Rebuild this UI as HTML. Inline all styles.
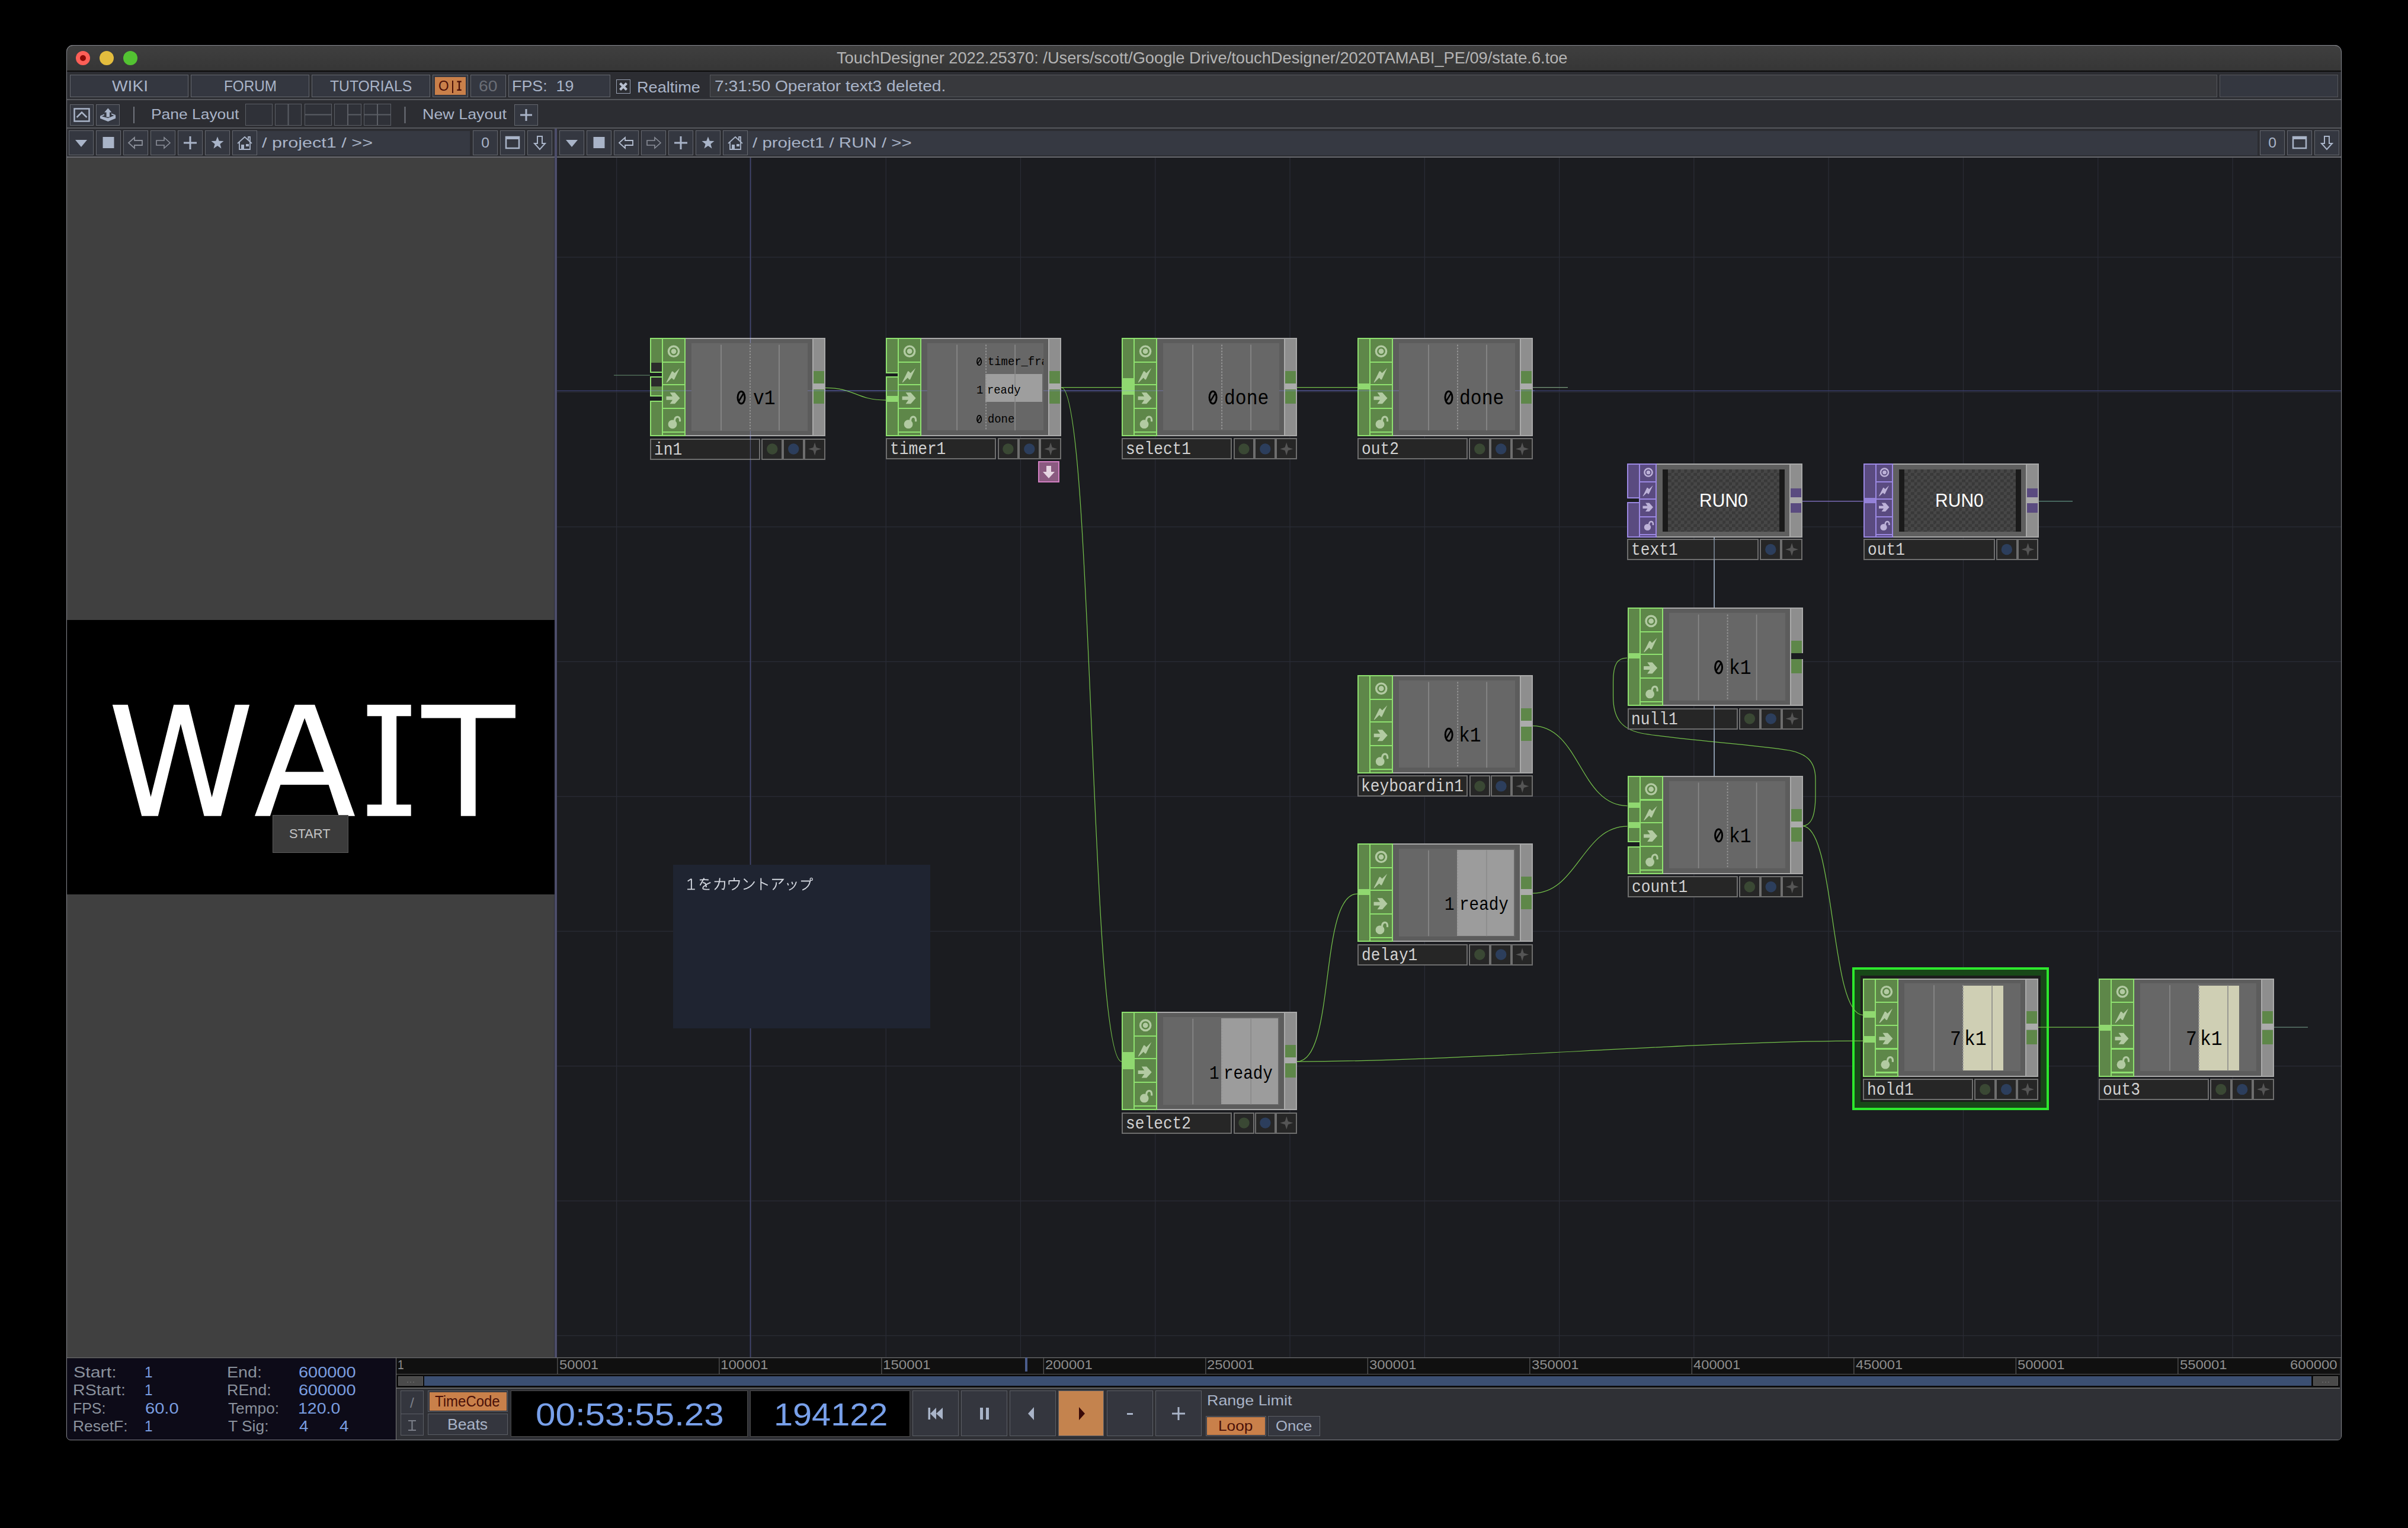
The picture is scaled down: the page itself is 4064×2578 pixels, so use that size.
<!DOCTYPE html>
<html><head><meta charset="utf-8"><title>TouchDesigner</title>
<style>
html,body{margin:0;padding:0;background:#000;width:4064px;height:2578px;overflow:hidden;position:relative;}
.a{position:absolute;}
.t{position:absolute;white-space:nowrap;}
svg{position:absolute;left:0;top:0;}
</style></head><body>
<div class="a" style="left:112px;top:76px;width:3839px;height:2353px;background:#2c2d32;border-radius:11px 11px 7px 7px;overflow:hidden;"></div><div class="a" style="left:112px;top:76px;width:3839px;height:43px;background:linear-gradient(#3f3f3f,#363636);border-radius:11px 11px 0 0;border-top:1px solid #707070;box-sizing:border-box;"></div><div class="a" style="left:112.0px;top:119.0px;width:3839.0px;height:2.0px;background:#0c0c0c;"></div><div class="a" style="left:127.8px;top:85.8px;width:24.4px;height:24.4px;border-radius:50%;background:#fe5f57;"></div><div class="a" style="left:135px;top:93px;width:10px;height:10px;border-radius:50%;background:#8c0a06;"></div><div class="a" style="left:167.8px;top:85.8px;width:24.4px;height:24.4px;border-radius:50%;background:#e4bd3e;"></div><div class="a" style="left:207.8px;top:85.8px;width:24.4px;height:24.4px;border-radius:50%;background:#53c232;"></div><div class="t" style="left:1412.39px;top:84.35px;font-family:'Liberation Sans', sans-serif;font-size:28.05px;line-height:28.05px;color:#b4b4b4;transform:scale(0.9712,1.0000);transform-origin:0 23.75px;">TouchDesigner 2022.25370: /Users/scott/Google Drive/touchDesigner/2020TAMABI_PE/09/state.6.toe</div><div class="a" style="left:112.0px;top:121.0px;width:3839.0px;height:47.0px;background:#2c2d32;"></div><div class="a" style="left:112.0px;top:167.0px;width:3839.0px;height:2.0px;background:#55575c;"></div><div class="a" style="left:118.0px;top:126.0px;width:200.0px;height:38.0px;background:#343740;box-sizing:border-box;border:1.5px solid #64676e;"></div><div class="t" style="left:188.73px;top:132.59px;font-family:'Liberation Sans', sans-serif;font-size:25.29px;line-height:25.29px;color:#a9b4c8;transform:scale(1.1137,1.0000);transform-origin:0 21.41px;">WIKI</div><div class="a" style="left:322.0px;top:126.0px;width:200.0px;height:38.0px;background:#343740;box-sizing:border-box;border:1.5px solid #64676e;"></div><div class="t" style="left:377.51px;top:132.59px;font-family:'Liberation Sans', sans-serif;font-size:25.29px;line-height:25.29px;color:#a9b4c8;transform:scale(0.9597,1.0000);transform-origin:0 21.41px;">FORUM</div><div class="a" style="left:526.0px;top:126.0px;width:200.0px;height:38.0px;background:#343740;box-sizing:border-box;border:1.5px solid #64676e;"></div><div class="t" style="left:556.94px;top:132.59px;font-family:'Liberation Sans', sans-serif;font-size:25.29px;line-height:25.29px;color:#a9b4c8;transform:scale(0.9772,1.0000);transform-origin:0 21.41px;">TUTORIALS</div><div class="a" style="left:730.0px;top:126.0px;width:60.0px;height:38.0px;background:#343740;box-sizing:border-box;border:1.5px solid #64676e;"></div><div class="a" style="left:734.0px;top:130.0px;width:52.0px;height:30.0px;background:#c9804a;"></div><div class="t" style="left:740.13px;top:132.69px;font-family:'Liberation Sans', sans-serif;font-size:23.98px;line-height:23.98px;color:#4a1008;transform:scale(0.9407,1.0000);transform-origin:0 20.31px;">O</div><div class="a" style="left:762.6px;top:136.0px;width:2.2px;height:21.0px;background:#4a1008;"></div><svg width="4064" height="2578"><path d="M771.4 136.5 L778.7 136.5 L778.7 138.8 L776.2 138.8 L776.2 150.8 L778.7 150.8 L778.7 153 L771.4 153 L771.4 150.8 L773.9 150.8 L773.9 138.8 L771.4 138.8 Z" fill="#4a1008"/></svg><div class="a" style="left:794.0px;top:126.0px;width:60.0px;height:38.0px;background:#343740;box-sizing:border-box;border:1.5px solid #64676e;"></div><div class="t" style="left:808.06px;top:132.59px;font-family:'Liberation Sans', sans-serif;font-size:25.29px;line-height:25.29px;color:#6a6e76;transform:scale(1.1215,1.0000);transform-origin:0 21.41px;">60</div><div class="a" style="left:858.0px;top:126.0px;width:172.0px;height:38.0px;background:#343740;box-sizing:border-box;border:1.5px solid #64676e;"></div><div class="t" style="left:864.00px;top:132.59px;font-family:'Liberation Sans', sans-serif;font-size:25.29px;line-height:25.29px;color:#a9b4c8;transform:scale(1.0618,1.0000);transform-origin:0 21.41px;">FPS:&nbsp;&nbsp;19</div><div class="a" style="left:1040.0px;top:134.0px;width:24.0px;height:24.0px;box-sizing:border-box;border:1.6px solid #9aa3b5;"></div><svg width="4064" height="2578" style="pointer-events:none"><path d="M1046.5 140.5 L1057.5 151.5 M1057.5 140.5 L1046.5 151.5" stroke="#b8c0d0" stroke-width="4.2"/></svg><div class="t" style="left:1074.78px;top:134.15px;font-family:'Liberation Sans', sans-serif;font-size:26.16px;line-height:26.16px;color:#a9b4c8;transform:scale(1.0358,1.0000);transform-origin:0 22.15px;">Realtime</div><div class="a" style="left:1198.0px;top:126.0px;width:2544.0px;height:38.0px;background:#38393d;box-sizing:border-box;border:1.5px solid #55575c;"></div><div class="t" style="left:1206.05px;top:133.29px;font-family:'Liberation Sans', sans-serif;font-size:25.29px;line-height:25.29px;color:#a9b4c8;transform:scale(1.1155,1.0000);transform-origin:0 21.41px;">7:31:50 Operator text3 deleted.</div><div class="a" style="left:3746.0px;top:126.0px;width:200.0px;height:38.0px;background:#343740;box-sizing:border-box;border:1.5px solid #55575c;"></div><div class="a" style="left:112.0px;top:169.0px;width:3839.0px;height:47.0px;background:#2c2d32;"></div><div class="a" style="left:112.0px;top:215.0px;width:3839.0px;height:2.0px;background:#55575c;"></div><div class="a" style="left:118.0px;top:176.0px;width:40.0px;height:36.0px;background:#343740;box-sizing:border-box;border:1.5px solid #64676e;"></div><div class="a" style="left:162.0px;top:176.0px;width:40.0px;height:36.0px;background:#343740;box-sizing:border-box;border:1.5px solid #64676e;"></div><svg width="4064" height="2578"><g fill="none" stroke="#a9b4c8" stroke-width="2.5"><rect x="125.5" y="183.5" width="25" height="21"/><path d="M129.5 198 L138 189.5 L146.5 198"/></g><g fill="#a9b4c8"><path d="M169 195.5 L169 199.8 L182.3 205 L195.1 199.8 L195.1 194.1 L182.3 199.3 Z"/><path d="M169 195.5 L176 192.5 L176 194.5 L171.5 196.3 Z M195.1 194.1 L188 191.2 L188 193.2 L192.5 195 Z"/><path d="M176.2 189.4 L182.3 182.6 L188.4 189.4 L185 189.4 L185 197.5 L179.6 197.5 L179.6 189.4 Z"/></g><path d="M226 180 L226 208" stroke="#70747c" stroke-width="2"/><path d="M683.5 180 L683.5 208" stroke="#70747c" stroke-width="2"/></svg><div class="t" style="left:254.83px;top:181.08px;font-family:'Liberation Sans', sans-serif;font-size:24.71px;line-height:24.71px;color:#a9b4c8;transform:scale(1.0692,1.0000);transform-origin:0 20.92px;">Pane Layout</div><div class="a" style="left:414.0px;top:175.0px;width:46.0px;height:37.0px;background:#2f3138;box-sizing:border-box;border:1.5px solid #5b5e65;"></div><div class="a" style="left:464.0px;top:175.0px;width:45.0px;height:37.0px;background:#2f3138;box-sizing:border-box;border:1.5px solid #5b5e65;"></div><div class="a" style="left:514.0px;top:175.0px;width:46.0px;height:37.0px;background:#2f3138;box-sizing:border-box;border:1.5px solid #5b5e65;"></div><div class="a" style="left:564.0px;top:175.0px;width:46.0px;height:37.0px;background:#2f3138;box-sizing:border-box;border:1.5px solid #5b5e65;"></div><div class="a" style="left:614.0px;top:175.0px;width:46.0px;height:37.0px;background:#2f3138;box-sizing:border-box;border:1.5px solid #5b5e65;"></div><svg width="4064" height="2578"><g stroke="#5b5e65" stroke-width="2" fill="none"><path d="M486.5 176 L486.5 211"/><path d="M515 193.5 L559 193.5"/><path d="M587 176 L587 211 M587 193.5 L609 193.5"/><path d="M637 176 L637 211 M615 193.5 L659 193.5"/></g></svg><div class="t" style="left:713.10px;top:181.08px;font-family:'Liberation Sans', sans-serif;font-size:24.71px;line-height:24.71px;color:#a9b4c8;transform:scale(1.0875,1.0000);transform-origin:0 20.92px;">New Layout</div><div class="a" style="left:868.0px;top:176.0px;width:40.0px;height:36.0px;background:#343740;box-sizing:border-box;border:1.5px solid #64676e;"></div><svg width="4064" height="2578"><path d="M888 184 L888 204 M878 194 L898 194" stroke="#a9b4c8" stroke-width="3"/></svg><div class="a" style="left:112.0px;top:217.0px;width:3839.0px;height:48.0px;background:#2c2d32;"></div><div class="a" style="left:112.0px;top:264.0px;width:3839.0px;height:2.0px;background:#68696e;"></div><div class="a" style="left:116.0px;top:220.0px;width:42.0px;height:42.0px;background:#343740;box-sizing:border-box;border:1.5px solid #64676e;"></div><div class="a" style="left:162.0px;top:220.0px;width:42.0px;height:42.0px;background:#343740;box-sizing:border-box;border:1.5px solid #64676e;"></div><div class="a" style="left:208.0px;top:220.0px;width:42.0px;height:42.0px;background:#343740;box-sizing:border-box;border:1.5px solid #64676e;"></div><div class="a" style="left:254.0px;top:220.0px;width:42.0px;height:42.0px;background:#343740;box-sizing:border-box;border:1.5px solid #64676e;"></div><div class="a" style="left:300.0px;top:220.0px;width:42.0px;height:42.0px;background:#343740;box-sizing:border-box;border:1.5px solid #64676e;"></div><div class="a" style="left:346.0px;top:220.0px;width:42.0px;height:42.0px;background:#343740;box-sizing:border-box;border:1.5px solid #64676e;"></div><div class="a" style="left:392.0px;top:220.0px;width:42.0px;height:42.0px;background:#343740;box-sizing:border-box;border:1.5px solid #64676e;"></div><div class="a" style="left:434.0px;top:221.0px;width:359.0px;height:41.0px;background:#363942;"></div><svg width="4064" height="2578"><path d="M127 236 L147 236 L137 248 Z" fill="#a9b4c8"/><rect x="173.5" y="231" width="19" height="19" fill="#a9b4c8"/><path d="M217 241 L227 232 L227 237 L240 237 L240 245 L227 245 L227 250 Z" fill="none" stroke="#8a8e98" stroke-width="1.8"/><path d="M287 241 L277 232 L277 237 L264 237 L264 245 L277 245 L277 250 Z" fill="none" stroke="#8a8e98" stroke-width="1.6"/><path d="M321 230 L321 252 M310 241 L332 241" stroke="#a9b4c8" stroke-width="3"/><polygon points="367.0,230.5 369.7,237.8 377.5,238.1 371.4,242.9 373.5,250.4 367.0,246.1 360.5,250.4 362.6,242.9 356.5,238.1 364.3,237.8" fill="#a9b4c8"/><path d="M401 242 L413 231 L425 242 M404 240 L404 252 L422 252 L422 240 M419 237 L419 231 L422 231 L422 239" fill="none" stroke="#a9b4c8" stroke-width="1.8"/><rect x="407" y="244" width="5" height="8" fill="#a9b4c8"/><rect x="415" y="243" width="5" height="4" fill="#a9b4c8"/></svg><div class="t" style="left:441.50px;top:229.08px;font-family:'Liberation Sans', sans-serif;font-size:24.71px;line-height:24.71px;color:#a9b4c8;transform:scale(1.2383,1.0000);transform-origin:0 20.92px;">/ project1 / &gt;&gt;</div><div class="a" style="left:944.0px;top:220.0px;width:42.0px;height:42.0px;background:#343740;box-sizing:border-box;border:1.5px solid #64676e;"></div><div class="a" style="left:990.0px;top:220.0px;width:42.0px;height:42.0px;background:#343740;box-sizing:border-box;border:1.5px solid #64676e;"></div><div class="a" style="left:1036.0px;top:220.0px;width:42.0px;height:42.0px;background:#343740;box-sizing:border-box;border:1.5px solid #64676e;"></div><div class="a" style="left:1082.0px;top:220.0px;width:42.0px;height:42.0px;background:#343740;box-sizing:border-box;border:1.5px solid #64676e;"></div><div class="a" style="left:1128.0px;top:220.0px;width:42.0px;height:42.0px;background:#343740;box-sizing:border-box;border:1.5px solid #64676e;"></div><div class="a" style="left:1174.0px;top:220.0px;width:42.0px;height:42.0px;background:#343740;box-sizing:border-box;border:1.5px solid #64676e;"></div><div class="a" style="left:1220.0px;top:220.0px;width:42.0px;height:42.0px;background:#343740;box-sizing:border-box;border:1.5px solid #64676e;"></div><div class="a" style="left:1262.0px;top:221.0px;width:2548.0px;height:41.0px;background:#363942;"></div><svg width="4064" height="2578"><path d="M955 236 L975 236 L965 248 Z" fill="#a9b4c8"/><rect x="1001.5" y="231" width="19" height="19" fill="#a9b4c8"/><path d="M1045 241 L1055 232 L1055 237 L1068 237 L1068 245 L1055 245 L1055 250 Z" fill="none" stroke="#b4bed0" stroke-width="1.8"/><path d="M1115 241 L1105 232 L1105 237 L1092 237 L1092 245 L1105 245 L1105 250 Z" fill="none" stroke="#8a8e98" stroke-width="1.6"/><path d="M1149 230 L1149 252 M1138 241 L1160 241" stroke="#a9b4c8" stroke-width="3"/><polygon points="1195.0,230.5 1197.7,237.8 1205.5,238.1 1199.4,242.9 1201.5,250.4 1195.0,246.1 1188.5,250.4 1190.6,242.9 1184.5,238.1 1192.3,237.8" fill="#a9b4c8"/><path d="M1229 242 L1241 231 L1253 242 M1232 240 L1232 252 L1250 252 L1250 240 M1247 237 L1247 231 L1250 231 L1250 239" fill="none" stroke="#a9b4c8" stroke-width="1.8"/><rect x="1235" y="244" width="5" height="8" fill="#a9b4c8"/><rect x="1243" y="243" width="5" height="4" fill="#a9b4c8"/></svg><div class="t" style="left:1269.50px;top:229.08px;font-family:'Liberation Sans', sans-serif;font-size:24.71px;line-height:24.71px;color:#a9b4c8;transform:scale(1.1937,1.0000);transform-origin:0 20.92px;">/ project1 / RUN / &gt;&gt;</div><div class="a" style="left:798.0px;top:220.0px;width:42.0px;height:42.0px;background:#343740;box-sizing:border-box;border:1.5px solid #64676e;"></div><div class="a" style="left:844.0px;top:220.0px;width:42.0px;height:42.0px;background:#343740;box-sizing:border-box;border:1.5px solid #64676e;"></div><div class="a" style="left:890.0px;top:220.0px;width:42.0px;height:42.0px;background:#343740;box-sizing:border-box;border:1.5px solid #64676e;"></div><svg width="4064" height="2578"><rect x="854" y="231" width="22" height="19" fill="none" stroke="#a9b4c8" stroke-width="2.5"/><rect x="854" y="231" width="22" height="4" fill="#a9b4c8"/><path d="M907 230 L915 230 L915 242 L920 242 L911 252 L902 242 L907 242 Z" fill="none" stroke="#a9b4c8" stroke-width="2"/></svg><div class="t" style="left:812.13px;top:229.08px;font-family:'Liberation Sans', sans-serif;font-size:24.71px;line-height:24.71px;color:#a9b4c8;">0</div><div class="a" style="left:3814.0px;top:220.0px;width:42.0px;height:42.0px;background:#343740;box-sizing:border-box;border:1.5px solid #64676e;"></div><div class="a" style="left:3860.0px;top:220.0px;width:42.0px;height:42.0px;background:#343740;box-sizing:border-box;border:1.5px solid #64676e;"></div><div class="a" style="left:3906.0px;top:220.0px;width:42.0px;height:42.0px;background:#343740;box-sizing:border-box;border:1.5px solid #64676e;"></div><svg width="4064" height="2578"><rect x="3870" y="231" width="22" height="19" fill="none" stroke="#a9b4c8" stroke-width="2.5"/><rect x="3870" y="231" width="22" height="4" fill="#a9b4c8"/><path d="M3923 230 L3931 230 L3931 242 L3936 242 L3927 252 L3918 242 L3923 242 Z" fill="none" stroke="#a9b4c8" stroke-width="2"/></svg><div class="t" style="left:3828.13px;top:229.08px;font-family:'Liberation Sans', sans-serif;font-size:24.71px;line-height:24.71px;color:#a9b4c8;">0</div><div class="a" style="left:935.5px;top:217.0px;width:4.5px;height:49.0px;background:#4c4d6a;"></div><div class="a" style="left:113.0px;top:266.0px;width:822.0px;height:2024.0px;background:#404040;"></div><div class="a" style="left:112.0px;top:266.0px;width:1.0px;height:2024.0px;background:#6a6a6a;"></div><div class="a" style="left:935.5px;top:266.0px;width:4.5px;height:2024.0px;background:#4c4d6a;"></div><div class="a" style="left:113.0px;top:1046.0px;width:823.0px;height:463.0px;background:#000000;"></div><svg width="4064" height="2578"><g fill="#ffffff"><polygon points="189.8,1189.1 215.7,1189.1 254.5,1344.6 293.2,1189.1 318.8,1189.1 357.6,1345.3 396.7,1189.1 421.1,1189.1 373.1,1376.7 344.5,1376.7 304.9,1221.2 266.8,1376.7 239.2,1376.7"/><path fill-rule="evenodd" d="M430,1376.7 L497.7,1189.1 L531.2,1189.1 L599,1376.7 L571.9,1376.7 L554.6,1324.1 L473.4,1324.1 L455.9,1376.7 Z M514.1,1211.5 L546.6,1302.2 L481.2,1302.2 Z"/><polygon points="619.7,1189.1 693.7,1189.1 693.7,1208.3 669.2,1208.3 669.2,1357.4 693.7,1357.4 693.7,1376.7 619.7,1376.7 619.7,1357.4 644.3,1357.4 644.3,1208.3 619.7,1208.3"/><polygon points="711,1189.1 869.9,1189.1 869.9,1211.5 802.7,1211.5 802.7,1376.7 777.8,1376.7 777.8,1211.5 711,1211.5"/></g></svg><div class="a" style="left:460.0px;top:1375.0px;width:128.0px;height:64.0px;background:#3b3b3b;box-sizing:border-box;border:1.5px solid #5a5a5a;"></div><div class="t" style="left:488.02px;top:1395.54px;font-family:'Liberation Sans', sans-serif;font-size:21.80px;line-height:21.80px;color:#c4c4c4;">START</div><div class="a" style="left:940.0px;top:266.0px;width:3011.0px;height:2024.0px;background:#1b1c20;"></div><svg width="4064" height="2578" viewBox="0 0 4064 2578"><defs><clipPath id="netclip"><rect x="940" y="266" width="3011" height="2024"/></clipPath></defs><g clip-path="url(#netclip)"><rect x="1040.0" y="266" width="1.3" height="2024" fill="#2a2c35"/><rect x="1267.3" y="266" width="1.3" height="2024" fill="#2a2c35"/><rect x="1494.6" y="266" width="1.3" height="2024" fill="#2a2c35"/><rect x="1721.8" y="266" width="1.3" height="2024" fill="#2a2c35"/><rect x="1949.1" y="266" width="1.3" height="2024" fill="#2a2c35"/><rect x="2176.4" y="266" width="1.3" height="2024" fill="#2a2c35"/><rect x="2403.7" y="266" width="1.3" height="2024" fill="#2a2c35"/><rect x="2631.0" y="266" width="1.3" height="2024" fill="#2a2c35"/><rect x="2858.2" y="266" width="1.3" height="2024" fill="#2a2c35"/><rect x="3085.5" y="266" width="1.3" height="2024" fill="#2a2c35"/><rect x="3312.8" y="266" width="1.3" height="2024" fill="#2a2c35"/><rect x="3540.1" y="266" width="1.3" height="2024" fill="#2a2c35"/><rect x="3767.4" y="266" width="1.3" height="2024" fill="#2a2c35"/><rect x="940" y="433.3" width="3011" height="1.3" fill="#2a2c35"/><rect x="940" y="660.8" width="3011" height="1.3" fill="#2a2c35"/><rect x="940" y="888.2" width="3011" height="1.3" fill="#2a2c35"/><rect x="940" y="1115.7" width="3011" height="1.3" fill="#2a2c35"/><rect x="940" y="1343.1" width="3011" height="1.3" fill="#2a2c35"/><rect x="940" y="1570.6" width="3011" height="1.3" fill="#2a2c35"/><rect x="940" y="1798.0" width="3011" height="1.3" fill="#2a2c35"/><rect x="940" y="2025.5" width="3011" height="1.3" fill="#2a2c35"/><rect x="940" y="2252.9" width="3011" height="1.3" fill="#2a2c35"/><rect x="1265.7" y="266" width="1.3" height="2024" fill="#474b7c"/><rect x="940" y="658.7" width="3011" height="1.3" fill="#3c4070"/><rect x="1136" y="1459" width="434" height="276" fill="#1f2431"/></g></svg><div class="a" style="left:3126.0px;top:1632.0px;width:332.0px;height:241.0px;background:#184818;box-sizing:border-box;border:4.4px solid #2de82d;"></div><div class="a" style="left:3140.0px;top:1645.7px;width:303.6px;height:213.0px;background:#1c1c1c;"></div><svg width="4064" height="2578"><g fill="none"><rect x="2892.6" y="897" width="1.1" height="412" fill="#a4b6cc"/><path d="M1393,654.3 C1443,654.3 1445,675 1495,675" stroke="#74c04a" stroke-width="1.25"/><path d="M1791,653.6 L1893,653.6" stroke="#74c04a" stroke-width="1.25"/><path d="M1791,653.6 C1845,653.6 1839,1791 1893,1791" stroke="#74c04a" stroke-width="1.25"/><path d="M2189,653.6 L2291,653.6" stroke="#74c04a" stroke-width="1.25"/><path d="M2587,653.6 L2646,653.6" stroke="#7a9a7c" stroke-width="1.25"/><path d="M1036,633 L1097,633" stroke="#5a7a60" stroke-width="1.25"/><path d="M3042,845.5 L3144.5,845.5" stroke="#8a78d0" stroke-width="1.25"/><path d="M3440,845.5 L3498,845.5" stroke="#5f8f80" stroke-width="1.25"/><path d="M2586.3,1224.5 C2666.3,1224.5 2666.4,1359.5 2746.4,1359.5" stroke="#74c04a" stroke-width="1.25"/><path d="M2586.3,1507.2 C2662.3,1507.2 2670.4,1394.2 2746.4,1394.2" stroke="#74c04a" stroke-width="1.25"/><path d="M2189,1791 C2255,1791 2225,1508 2291,1508" stroke="#74c04a" stroke-width="1.25"/><path d="M2189,1791 C2464,1791 2869,1756 3144,1756" stroke="#74c04a" stroke-width="1.25"/><path d="M3041,1393.5 C3058,1393.5 3064,1375 3064,1340 L3064,1315 C3064,1285 3050,1272 3020,1266 C2960,1256 2830,1248 2770,1237 C2735,1230 2722.6,1210 2722.6,1175 L2722.6,1150 C2722.6,1120 2730,1110 2746,1110" stroke="#74c04a" stroke-width="1.25"/><path d="M3042,1393.7 C3098,1393.7 3088,1712.5 3144,1712.5" stroke="#74c04a" stroke-width="1.25"/><path d="M3440,1733 L3542,1733" stroke="#74c04a" stroke-width="1.25"/><path d="M3838,1733 L3895,1733" stroke="#6a8a7a" stroke-width="1.25"/></g></svg><svg width="4064" height="2578"><g transform="translate(1155,1475) scale(0.09137)" fill="none" stroke="#d2d6de" stroke-width="21"><path d="M130,85 L130,280 M62,128 L130,85 M55,278 L195,278"/><path d="M283,105 Q365,95 447,104 M366,71 L290,205 M339,157 C375,150 404,170 404,241 M402,189 L484,153 M391,207 C350,220 335,250 345,268 C355,282 400,280 464,280"/><path d="M555,135 L745,135 C745,200 740,260 725,278 L690,272 M655,70 C652,160 620,240 560,285"/><path d="M920,62 L920,115 M825,118 L825,192 M825,120 L1015,120 C1010,200 960,260 880,288"/><path d="M1100,85 L1168,148 M1095,278 C1180,260 1250,210 1295,135"/><path d="M1415,70 L1415,292 M1425,150 L1540,205"/><path d="M1620,95 L1825,95 C1800,130 1770,160 1745,178 M1700,148 C1700,210 1680,255 1635,288"/><path d="M1905,162 L1922,205 M1985,140 L2002,188 M2068,138 C2050,210 2010,265 1935,292"/><path d="M2155,125 L2325,125 C2310,200 2270,260 2180,292"/><circle cx="2345" cy="92" r="22" stroke-width="14"/></g></svg><div class="a" style="left:1097.0px;top:570.3px;width:296.0px;height:166.0px;background:#a9a9a9;"></div><div class="a" style="left:1157.0px;top:572.3px;width:214.0px;height:162.0px;background:#5c5c5c;"></div><div class="a" style="left:1373.0px;top:572.3px;width:18.0px;height:162.0px;background:#8e8e8e;"></div><div class="a" style="left:1371.0px;top:572.3px;width:2.0px;height:162.0px;background:#a9a9a9;"></div><div class="a" style="left:1167.0px;top:579.0px;width:196.0px;height:147.6px;background:#676767;"></div><svg width="4064" height="2578"><rect x="1216.2" y="581.7" width="1.6" height="144.6" fill="#8a8a8a"/><rect x="1314.2" y="581.7" width="1.6" height="144.6" fill="#8a8a8a"/><line x1="1266.0" y1="581.7" x2="1266.0" y2="726.3" stroke="#969696" stroke-width="1.9" stroke-dasharray="2.6 2.4"/></svg><div class="a" style="left:1097.0px;top:570.3px;width:60.0px;height:166.0px;background:#5e8749;box-sizing:border-box;border:2.2px solid #8ee06f;"></div><div class="a" style="left:1117.0px;top:570.3px;width:2.0px;height:166.0px;background:#8ee06f;"></div><div class="a" style="left:1117.0px;top:609.7px;width:40.0px;height:2.2px;background:#8ee06f;"></div><div class="a" style="left:1117.0px;top:648.2px;width:40.0px;height:2.2px;background:#8ee06f;"></div><div class="a" style="left:1117.0px;top:688.0px;width:40.0px;height:2.2px;background:#8ee06f;"></div><div class="a" style="left:1117.0px;top:728.0px;width:40.0px;height:2.2px;background:#8ee06f;"></div><div class="a" style="left:1099.2px;top:612.0px;width:18.0px;height:14.6px;background:#2b2b2b;"></div><div class="a" style="left:1097.0px;top:626.6px;width:20.0px;height:2.2px;background:#8ee06f;"></div><div class="a" style="left:1097.0px;top:628.8px;width:20.0px;height:6.2px;background:#1b1c20;"></div><div class="a" style="left:1097.0px;top:635.0px;width:20.0px;height:2.2px;background:#8ee06f;"></div><div class="a" style="left:1099.2px;top:637.3px;width:18.0px;height:15.2px;background:#2b2b2b;"></div><div class="a" style="left:1097.0px;top:667.1px;width:20.0px;height:2.2px;background:#8ee06f;"></div><div class="a" style="left:1097.0px;top:669.3px;width:20.0px;height:6.7px;background:#1b1c20;"></div><div class="a" style="left:1097.0px;top:676.0px;width:20.0px;height:2.2px;background:#8ee06f;"></div><svg width="4064" height="2578"><circle cx="1137" cy="592.8" r="8.6" fill="none" stroke="#b2caa2" stroke-width="3.4"/><circle cx="1137" cy="592.8" r="4.4" fill="#b2caa2"/><polygon points="1124.6,645.0 1134.0,626.4 1135.8,626.7 1138.5,629.6 1147.1,621.2 1137.9,640.5 1136.1,640.3 1133.8,637.4 1125.4,645.5" fill="#b2caa2"/><polygon points="1124.5,668.8 1135.0,668.8 1130.5,662.3 1139.0,662.3 1147.5,671.8 1139.0,681.3 1130.5,681.3 1135.0,674.8 1124.5,674.8" fill="#b2caa2"/><circle cx="1135" cy="715.8" r="7.4" fill="#b2caa2"/><path d="M1138.5 710.3 C1138.5 701.3 1147.5 701.3 1147.5 708.3 L1147.5 711.3" fill="none" stroke="#b2caa2" stroke-width="3.2"/></svg><div class="a" style="left:1373.0px;top:625.9px;width:18.0px;height:21.0px;background:#5e8749;"></div><div class="a" style="left:1373.0px;top:646.9px;width:20.0px;height:10.2px;background:#ababab;"></div><div class="a" style="left:1373.0px;top:657.1px;width:18.0px;height:24.0px;background:#5e8749;"></div><svg width="4064" height="2578"><ellipse cx="1251.00" cy="670.70" rx="6.00" ry="10.30" fill="none" stroke="#000" stroke-width="3.00"/><path d="M1247.00 676.50 L1255.00 663.50" stroke="#000" stroke-width="2.60"/></svg><div class="t" style="left:1270.54px;top:655.17px;font-family:'Liberation Mono', monospace;font-size:35.68px;line-height:35.68px;color:#000;transform:scale(0.8800,1.0000);transform-origin:0 27.33px;">v1</div><div class="a" style="left:1097.0px;top:739.5px;width:186.0px;height:36.0px;background:#262626;box-sizing:border-box;border:2px solid #6e6e6e;"></div><div class="a" style="left:1285.4px;top:739.5px;width:35.9px;height:36.0px;background:#262626;box-sizing:border-box;border:2px solid #6e6e6e;"></div><div class="a" style="left:1321.3px;top:739.5px;width:35.9px;height:36.0px;background:#262626;box-sizing:border-box;border:2px solid #6e6e6e;"></div><div class="a" style="left:1357.1px;top:739.5px;width:35.9px;height:36.0px;background:#262626;box-sizing:border-box;border:2px solid #6e6e6e;"></div><svg width="4064" height="2578"><circle cx="1303.3" cy="757.5" r="9.2" fill="#3a4834"/><circle cx="1339.2" cy="757.5" r="9.2" fill="#2c3e5c"/><polygon points="1375.1,746.5 1377.7,754.9 1386.1,757.5 1377.7,760.1 1375.1,768.5 1372.5,760.1 1364.1,757.5 1372.5,754.9" fill="#555555"/></svg><div class="t" style="left:1104.17px;top:744.54px;font-family:'Liberation Mono', monospace;font-size:29.45px;line-height:29.45px;color:#d2d2d2;transform:scale(0.8900,1.0000);transform-origin:0 22.56px;">in1</div><div class="a" style="left:1495.1px;top:570.2px;width:296.0px;height:166.0px;background:#a9a9a9;"></div><div class="a" style="left:1555.1px;top:572.2px;width:214.0px;height:162.0px;background:#5c5c5c;"></div><div class="a" style="left:1771.1px;top:572.2px;width:18.0px;height:162.0px;background:#8e8e8e;"></div><div class="a" style="left:1769.1px;top:572.2px;width:2.0px;height:162.0px;background:#a9a9a9;"></div><div class="a" style="left:1565.1px;top:578.9px;width:196.0px;height:147.6px;background:#676767;"></div><div class="a" style="left:1663.3px;top:631.1px;width:95.8px;height:46.7px;background:#9e9e9e;"></div><svg width="4064" height="2578"><rect x="1614.3" y="581.6" width="1.6" height="144.6" fill="#8a8a8a"/><rect x="1712.3" y="581.6" width="1.6" height="144.6" fill="#8a8a8a"/><line x1="1664.1" y1="581.6" x2="1664.1" y2="726.2" stroke="#969696" stroke-width="1.9" stroke-dasharray="2.6 2.4"/></svg><div class="a" style="left:1495.1px;top:570.2px;width:60.0px;height:166.0px;background:#5e8749;box-sizing:border-box;border:2.2px solid #8ee06f;"></div><div class="a" style="left:1515.1px;top:570.2px;width:2.0px;height:166.0px;background:#8ee06f;"></div><div class="a" style="left:1515.1px;top:609.6px;width:40.0px;height:2.2px;background:#8ee06f;"></div><div class="a" style="left:1515.1px;top:648.1px;width:40.0px;height:2.2px;background:#8ee06f;"></div><div class="a" style="left:1515.1px;top:687.9px;width:40.0px;height:2.2px;background:#8ee06f;"></div><div class="a" style="left:1515.1px;top:727.9px;width:40.0px;height:2.2px;background:#8ee06f;"></div><div class="a" style="left:1495.1px;top:627.6px;width:20.0px;height:2.2px;background:#8ee06f;"></div><div class="a" style="left:1495.1px;top:629.8px;width:20.0px;height:5.4px;background:#1b1c20;"></div><div class="a" style="left:1495.1px;top:635.2px;width:20.0px;height:2.2px;background:#8ee06f;"></div><div class="a" style="left:1495.1px;top:668.2px;width:20.5px;height:9.6px;background:#90d870;"></div><svg width="4064" height="2578"><circle cx="1535.1" cy="592.7" r="8.6" fill="none" stroke="#b2caa2" stroke-width="3.4"/><circle cx="1535.1" cy="592.7" r="4.4" fill="#b2caa2"/><polygon points="1522.7,644.9 1532.1,626.3 1533.9,626.6 1536.6,629.5 1545.2,621.1 1536.0,640.4 1534.2,640.2 1531.9,637.3 1523.5,645.4" fill="#b2caa2"/><polygon points="1522.6,668.7 1533.1,668.7 1528.6,662.2 1537.1,662.2 1545.6,671.7 1537.1,681.2 1528.6,681.2 1533.1,674.7 1522.6,674.7" fill="#b2caa2"/><circle cx="1533.1" cy="715.7" r="7.4" fill="#b2caa2"/><path d="M1536.6 710.2 C1536.6 701.2 1545.6 701.2 1545.6 708.2 L1545.6 711.2" fill="none" stroke="#b2caa2" stroke-width="3.2"/></svg><div class="a" style="left:1771.1px;top:625.8px;width:18.0px;height:21.0px;background:#5e8749;"></div><div class="a" style="left:1771.1px;top:646.8px;width:20.0px;height:10.2px;background:#ababab;"></div><div class="a" style="left:1771.1px;top:657.0px;width:18.0px;height:24.0px;background:#5e8749;"></div><div class="a" style="left:1565.1px;top:578.9000000000001px;width:196px;height:147.6px;overflow:hidden;"><svg style="position:absolute;left:0;top:0" width="4064" height="2578"><ellipse cx="87.60" cy="31.02" rx="3.60" ry="6.18" fill="none" stroke="#000" stroke-width="1.80"/><path d="M85.20 34.50 L90.00 26.70" stroke="#000" stroke-width="1.56"/></svg><div class="t" style="left:101.45px;top:22.05px;font-family:'Liberation Mono', monospace;font-size:20.95px;line-height:20.95px;color:#000;transform:scale(0.9000,1.0000);transform-origin:0 16.05px;">timer_frames</div></div><div class="a" style="left:1565.1px;top:578.9000000000001px;width:196px;height:147.6px;overflow:hidden;"><div class="t" style="left:82.60px;top:70.55px;font-family:'Liberation Mono', monospace;font-size:20.95px;line-height:20.95px;color:#000;transform:scale(0.9000,1.0000);transform-origin:0 16.05px;">1</div><div class="t" style="left:100.97px;top:70.55px;font-family:'Liberation Mono', monospace;font-size:20.95px;line-height:20.95px;color:#000;transform:scale(0.9000,1.0000);transform-origin:0 16.05px;">ready</div></div><div class="a" style="left:1565.1px;top:578.9000000000001px;width:196px;height:147.6px;overflow:hidden;"><svg style="position:absolute;left:0;top:0" width="4064" height="2578"><ellipse cx="87.60" cy="128.02" rx="3.60" ry="6.18" fill="none" stroke="#000" stroke-width="1.80"/><path d="M85.20 131.50 L90.00 123.70" stroke="#000" stroke-width="1.56"/></svg><div class="t" style="left:101.93px;top:119.05px;font-family:'Liberation Mono', monospace;font-size:20.95px;line-height:20.95px;color:#000;transform:scale(0.9000,1.0000);transform-origin:0 16.05px;">done</div></div><div class="a" style="left:1495.1px;top:739.4px;width:186.0px;height:36.0px;background:#262626;box-sizing:border-box;border:2px solid #6e6e6e;"></div><div class="a" style="left:1683.5px;top:739.4px;width:35.9px;height:36.0px;background:#262626;box-sizing:border-box;border:2px solid #6e6e6e;"></div><div class="a" style="left:1719.4px;top:739.4px;width:35.9px;height:36.0px;background:#262626;box-sizing:border-box;border:2px solid #6e6e6e;"></div><div class="a" style="left:1755.2px;top:739.4px;width:35.9px;height:36.0px;background:#262626;box-sizing:border-box;border:2px solid #6e6e6e;"></div><svg width="4064" height="2578"><circle cx="1701.4" cy="757.4" r="9.2" fill="#3a4834"/><circle cx="1737.3" cy="757.4" r="9.2" fill="#2c3e5c"/><polygon points="1773.2,746.4 1775.8,754.8 1784.2,757.4 1775.8,760.0 1773.2,768.4 1770.6,760.0 1762.2,757.4 1770.6,754.8" fill="#555555"/></svg><div class="t" style="left:1501.67px;top:744.44px;font-family:'Liberation Mono', monospace;font-size:29.45px;line-height:29.45px;color:#d2d2d2;transform:scale(0.8900,1.0000);transform-origin:0 22.56px;">timer1</div><div class="a" style="left:1893.1px;top:570.2px;width:296.0px;height:166.0px;background:#a9a9a9;"></div><div class="a" style="left:1953.1px;top:572.2px;width:214.0px;height:162.0px;background:#5c5c5c;"></div><div class="a" style="left:2169.1px;top:572.2px;width:18.0px;height:162.0px;background:#8e8e8e;"></div><div class="a" style="left:2167.1px;top:572.2px;width:2.0px;height:162.0px;background:#a9a9a9;"></div><div class="a" style="left:1963.1px;top:578.9px;width:196.0px;height:147.6px;background:#676767;"></div><svg width="4064" height="2578"><rect x="2012.3" y="581.6" width="1.6" height="144.6" fill="#8a8a8a"/><rect x="2110.3" y="581.6" width="1.6" height="144.6" fill="#8a8a8a"/><line x1="2062.1" y1="581.6" x2="2062.1" y2="726.2" stroke="#969696" stroke-width="1.9" stroke-dasharray="2.6 2.4"/></svg><div class="a" style="left:1893.1px;top:570.2px;width:60.0px;height:166.0px;background:#5e8749;box-sizing:border-box;border:2.2px solid #8ee06f;"></div><div class="a" style="left:1913.1px;top:570.2px;width:2.0px;height:166.0px;background:#8ee06f;"></div><div class="a" style="left:1913.1px;top:609.6px;width:40.0px;height:2.2px;background:#8ee06f;"></div><div class="a" style="left:1913.1px;top:648.1px;width:40.0px;height:2.2px;background:#8ee06f;"></div><div class="a" style="left:1913.1px;top:687.9px;width:40.0px;height:2.2px;background:#8ee06f;"></div><div class="a" style="left:1913.1px;top:727.9px;width:40.0px;height:2.2px;background:#8ee06f;"></div><div class="a" style="left:1893.1px;top:638.0px;width:20.5px;height:28.2px;background:#90d870;"></div><svg width="4064" height="2578"><circle cx="1933.1" cy="592.7" r="8.6" fill="none" stroke="#b2caa2" stroke-width="3.4"/><circle cx="1933.1" cy="592.7" r="4.4" fill="#b2caa2"/><polygon points="1920.7,644.9 1930.1,626.3 1931.9,626.6 1934.6,629.5 1943.2,621.1 1934.0,640.4 1932.2,640.2 1929.9,637.3 1921.5,645.4" fill="#b2caa2"/><polygon points="1920.6,668.7 1931.1,668.7 1926.6,662.2 1935.1,662.2 1943.6,671.7 1935.1,681.2 1926.6,681.2 1931.1,674.7 1920.6,674.7" fill="#b2caa2"/><circle cx="1931.1" cy="715.7" r="7.4" fill="#b2caa2"/><path d="M1934.6 710.2 C1934.6 701.2 1943.6 701.2 1943.6 708.2 L1943.6 711.2" fill="none" stroke="#b2caa2" stroke-width="3.2"/></svg><div class="a" style="left:2169.1px;top:625.8px;width:18.0px;height:21.0px;background:#5e8749;"></div><div class="a" style="left:2169.1px;top:646.8px;width:20.0px;height:10.2px;background:#ababab;"></div><div class="a" style="left:2169.1px;top:657.0px;width:18.0px;height:24.0px;background:#5e8749;"></div><svg width="4064" height="2578"><ellipse cx="2047.10" cy="670.60" rx="6.00" ry="10.30" fill="none" stroke="#000" stroke-width="3.00"/><path d="M2043.10 676.40 L2051.10 663.40" stroke="#000" stroke-width="2.60"/></svg><div class="t" style="left:2065.58px;top:655.07px;font-family:'Liberation Mono', monospace;font-size:35.68px;line-height:35.68px;color:#000;transform:scale(0.8800,1.0000);transform-origin:0 27.33px;">done</div><div class="a" style="left:1893.1px;top:739.4px;width:186.0px;height:36.0px;background:#262626;box-sizing:border-box;border:2px solid #6e6e6e;"></div><div class="a" style="left:2081.5px;top:739.4px;width:35.9px;height:36.0px;background:#262626;box-sizing:border-box;border:2px solid #6e6e6e;"></div><div class="a" style="left:2117.4px;top:739.4px;width:35.9px;height:36.0px;background:#262626;box-sizing:border-box;border:2px solid #6e6e6e;"></div><div class="a" style="left:2153.2px;top:739.4px;width:35.9px;height:36.0px;background:#262626;box-sizing:border-box;border:2px solid #6e6e6e;"></div><svg width="4064" height="2578"><circle cx="2099.4" cy="757.4" r="9.2" fill="#3a4834"/><circle cx="2135.3" cy="757.4" r="9.2" fill="#2c3e5c"/><polygon points="2171.2,746.4 2173.8,754.8 2182.2,757.4 2173.8,760.0 2171.2,768.4 2168.6,760.0 2160.2,757.4 2168.6,754.8" fill="#555555"/></svg><div class="t" style="left:1899.96px;top:744.44px;font-family:'Liberation Mono', monospace;font-size:29.45px;line-height:29.45px;color:#d2d2d2;transform:scale(0.8900,1.0000);transform-origin:0 22.56px;">select1</div><div class="a" style="left:2291.0px;top:570.2px;width:296.0px;height:166.0px;background:#a9a9a9;"></div><div class="a" style="left:2351.0px;top:572.2px;width:214.0px;height:162.0px;background:#5c5c5c;"></div><div class="a" style="left:2567.0px;top:572.2px;width:18.0px;height:162.0px;background:#8e8e8e;"></div><div class="a" style="left:2565.0px;top:572.2px;width:2.0px;height:162.0px;background:#a9a9a9;"></div><div class="a" style="left:2361.0px;top:578.9px;width:196.0px;height:147.6px;background:#676767;"></div><svg width="4064" height="2578"><rect x="2410.2" y="581.6" width="1.6" height="144.6" fill="#8a8a8a"/><rect x="2508.2" y="581.6" width="1.6" height="144.6" fill="#8a8a8a"/><line x1="2460.0" y1="581.6" x2="2460.0" y2="726.2" stroke="#969696" stroke-width="1.9" stroke-dasharray="2.6 2.4"/></svg><div class="a" style="left:2291.0px;top:570.2px;width:60.0px;height:166.0px;background:#5e8749;box-sizing:border-box;border:2.2px solid #8ee06f;"></div><div class="a" style="left:2311.0px;top:570.2px;width:2.0px;height:166.0px;background:#8ee06f;"></div><div class="a" style="left:2311.0px;top:609.6px;width:40.0px;height:2.2px;background:#8ee06f;"></div><div class="a" style="left:2311.0px;top:648.1px;width:40.0px;height:2.2px;background:#8ee06f;"></div><div class="a" style="left:2311.0px;top:687.9px;width:40.0px;height:2.2px;background:#8ee06f;"></div><div class="a" style="left:2311.0px;top:727.9px;width:40.0px;height:2.2px;background:#8ee06f;"></div><div class="a" style="left:2291.0px;top:647.2px;width:20.5px;height:10.0px;background:#90d870;"></div><svg width="4064" height="2578"><circle cx="2331" cy="592.7" r="8.6" fill="none" stroke="#b2caa2" stroke-width="3.4"/><circle cx="2331" cy="592.7" r="4.4" fill="#b2caa2"/><polygon points="2318.6,644.9 2328.0,626.3 2329.8,626.6 2332.5,629.5 2341.1,621.1 2331.9,640.4 2330.1,640.2 2327.8,637.3 2319.4,645.4" fill="#b2caa2"/><polygon points="2318.5,668.7 2329.0,668.7 2324.5,662.2 2333.0,662.2 2341.5,671.7 2333.0,681.2 2324.5,681.2 2329.0,674.7 2318.5,674.7" fill="#b2caa2"/><circle cx="2329" cy="715.7" r="7.4" fill="#b2caa2"/><path d="M2332.5 710.2 C2332.5 701.2 2341.5 701.2 2341.5 708.2 L2341.5 711.2" fill="none" stroke="#b2caa2" stroke-width="3.2"/></svg><div class="a" style="left:2567.0px;top:625.8px;width:18.0px;height:21.0px;background:#5e8749;"></div><div class="a" style="left:2567.0px;top:646.8px;width:20.0px;height:10.2px;background:#ababab;"></div><div class="a" style="left:2567.0px;top:657.0px;width:18.0px;height:24.0px;background:#5e8749;"></div><svg width="4064" height="2578"><ellipse cx="2445.00" cy="670.60" rx="6.00" ry="10.30" fill="none" stroke="#000" stroke-width="3.00"/><path d="M2441.00 676.40 L2449.00 663.40" stroke="#000" stroke-width="2.60"/></svg><div class="t" style="left:2463.48px;top:655.07px;font-family:'Liberation Mono', monospace;font-size:35.68px;line-height:35.68px;color:#000;transform:scale(0.8800,1.0000);transform-origin:0 27.33px;">done</div><div class="a" style="left:2291.0px;top:739.4px;width:186.0px;height:36.0px;background:#262626;box-sizing:border-box;border:2px solid #6e6e6e;"></div><div class="a" style="left:2479.4px;top:739.4px;width:35.9px;height:36.0px;background:#262626;box-sizing:border-box;border:2px solid #6e6e6e;"></div><div class="a" style="left:2515.3px;top:739.4px;width:35.9px;height:36.0px;background:#262626;box-sizing:border-box;border:2px solid #6e6e6e;"></div><div class="a" style="left:2551.1px;top:739.4px;width:35.9px;height:36.0px;background:#262626;box-sizing:border-box;border:2px solid #6e6e6e;"></div><svg width="4064" height="2578"><circle cx="2497.3" cy="757.4" r="9.2" fill="#3a4834"/><circle cx="2533.2" cy="757.4" r="9.2" fill="#2c3e5c"/><polygon points="2569.1,746.4 2571.7,754.8 2580.1,757.4 2571.7,760.0 2569.1,768.4 2566.5,760.0 2558.1,757.4 2566.5,754.8" fill="#555555"/></svg><div class="t" style="left:2298.34px;top:744.44px;font-family:'Liberation Mono', monospace;font-size:29.45px;line-height:29.45px;color:#d2d2d2;transform:scale(0.8900,1.0000);transform-origin:0 22.56px;">out2</div><div class="a" style="left:2746.0px;top:782.2px;width:296.0px;height:124.5px;background:#a9a9a9;"></div><div class="a" style="left:2796.0px;top:784.2px;width:224.0px;height:120.5px;background:#5f5f5f;"></div><div class="a" style="left:3022.0px;top:784.2px;width:18.0px;height:120.5px;background:#8e8e8e;"></div><div class="a" style="left:3020.0px;top:784.2px;width:2.0px;height:120.5px;background:#a9a9a9;"></div><div class="a" style="left:2806.0px;top:791.7px;width:206.0px;height:105.0px;background:#1a1a1a;"></div><div class="a" style="left:2815px;top:791.7px;width:188px;height:105px;background-color:#474747;background-image:conic-gradient(#393939 25%, #474747 25% 50%, #393939 50% 75%, #474747 75%);background-size:10.8px 10.8px;"></div><div class="a" style="left:2746.0px;top:782.2px;width:50.0px;height:124.5px;background:#5a4b80;box-sizing:border-box;border:2.2px solid #9b88e2;"></div><div class="a" style="left:2766.0px;top:782.2px;width:2.0px;height:124.5px;background:#9b88e2;"></div><div class="a" style="left:2766.0px;top:811.7px;width:30.0px;height:2.0px;background:#9b88e2;"></div><div class="a" style="left:2766.0px;top:840.5px;width:30.0px;height:2.0px;background:#9b88e2;"></div><div class="a" style="left:2766.0px;top:870.5px;width:30.0px;height:2.0px;background:#9b88e2;"></div><div class="a" style="left:2766.0px;top:900.5px;width:30.0px;height:2.0px;background:#9b88e2;"></div><div class="a" style="left:2746.0px;top:838.6px;width:20.0px;height:2.2px;background:#9b88e2;"></div><div class="a" style="left:2746.0px;top:840.8px;width:20.0px;height:6.4px;background:#1b1c20;"></div><div class="a" style="left:2746.0px;top:847.2px;width:20.0px;height:2.2px;background:#9b88e2;"></div><svg width="4064" height="2578"></svg><svg width="4064" height="2578"><g transform="translate(2782.0,797.0) scale(0.76)"><circle cx="0" cy="0" r="8.6" fill="none" stroke="#bdb2d8" stroke-width="3.4"/><circle cx="0" cy="0" r="4.4" fill="#bdb2d8"/></g><g transform="translate(2782.0,826.2) scale(0.76)"><polygon points="-12.4,14.2 -3.0,-4.4 -1.2,-4.1 1.5,-1.2 10.1,-9.6 0.9,9.7 -0.9,9.5 -3.2,6.6 -11.6,14.7" fill="#bdb2d8"/></g><g transform="translate(2782.0,855.7) scale(0.76)"><polygon points="-12.5,-3.0 -2.0,-3.0 -6.5,-9.5 2.0,-9.5 10.5,0.0 2.0,9.5 -6.5,9.5 -2.0,3.0 -12.5,3.0" fill="#bdb2d8"/></g><g transform="translate(2782.0,885.7) scale(0.76)"><circle cx="-2" cy="5" r="7.4" fill="#bdb2d8"/><path d="M1.5 -0.5 C1.5 -9.5 10.5 -9.5 10.5 -2.5 L10.5 0.5" fill="none" stroke="#bdb2d8" stroke-width="3.2"/></g></svg><div class="a" style="left:3022.0px;top:823.9px;width:18.0px;height:14.8px;background:#5a4b80;"></div><div class="a" style="left:3022.0px;top:838.7px;width:20.0px;height:10.3px;background:#ababab;"></div><div class="a" style="left:3022.0px;top:849.0px;width:18.0px;height:15.7px;background:#5a4b80;"></div><div class="t" style="left:2867.83px;top:829.22px;font-family:'Liberation Sans', sans-serif;font-size:31.40px;line-height:31.40px;color:#ffffff;transform:scale(0.9574,1.0000);transform-origin:0 26.58px;">RUN0</div><div class="a" style="left:2746.0px;top:909.0px;width:222.0px;height:36.0px;background:#262626;box-sizing:border-box;border:2px solid #6e6e6e;"></div><div class="a" style="left:2970.4px;top:909.0px;width:35.8px;height:36.0px;background:#262626;box-sizing:border-box;border:2px solid #6e6e6e;"></div><div class="a" style="left:3006.2px;top:909.0px;width:35.8px;height:36.0px;background:#262626;box-sizing:border-box;border:2px solid #6e6e6e;"></div><svg width="4064" height="2578"><circle cx="2988.3" cy="927.0" r="9.2" fill="#2c3e5c"/><polygon points="3024.1,916.0 3026.7,924.4 3035.1,927.0 3026.7,929.6 3024.1,938.0 3021.5,929.6 3013.1,927.0 3021.5,924.4" fill="#555555"/></svg><div class="t" style="left:2752.57px;top:914.04px;font-family:'Liberation Mono', monospace;font-size:29.45px;line-height:29.45px;color:#d2d2d2;transform:scale(0.8900,1.0000);transform-origin:0 22.56px;">text1</div><div class="a" style="left:3144.5px;top:782.2px;width:296.0px;height:124.5px;background:#a9a9a9;"></div><div class="a" style="left:3194.5px;top:784.2px;width:224.0px;height:120.5px;background:#5f5f5f;"></div><div class="a" style="left:3420.5px;top:784.2px;width:18.0px;height:120.5px;background:#8e8e8e;"></div><div class="a" style="left:3418.5px;top:784.2px;width:2.0px;height:120.5px;background:#a9a9a9;"></div><div class="a" style="left:3204.5px;top:791.7px;width:206.0px;height:105.0px;background:#1a1a1a;"></div><div class="a" style="left:3213.5px;top:791.7px;width:188px;height:105px;background-color:#474747;background-image:conic-gradient(#393939 25%, #474747 25% 50%, #393939 50% 75%, #474747 75%);background-size:10.8px 10.8px;"></div><div class="a" style="left:3144.5px;top:782.2px;width:50.0px;height:124.5px;background:#5a4b80;box-sizing:border-box;border:2.2px solid #9b88e2;"></div><div class="a" style="left:3164.5px;top:782.2px;width:2.0px;height:124.5px;background:#9b88e2;"></div><div class="a" style="left:3164.5px;top:811.7px;width:30.0px;height:2.0px;background:#9b88e2;"></div><div class="a" style="left:3164.5px;top:840.5px;width:30.0px;height:2.0px;background:#9b88e2;"></div><div class="a" style="left:3164.5px;top:870.5px;width:30.0px;height:2.0px;background:#9b88e2;"></div><div class="a" style="left:3164.5px;top:900.5px;width:30.0px;height:2.0px;background:#9b88e2;"></div><div class="a" style="left:3144.5px;top:839.6px;width:20.5px;height:9.3px;background:#9482d8;"></div><svg width="4064" height="2578"></svg><svg width="4064" height="2578"><g transform="translate(3180.5,797.0) scale(0.76)"><circle cx="0" cy="0" r="8.6" fill="none" stroke="#bdb2d8" stroke-width="3.4"/><circle cx="0" cy="0" r="4.4" fill="#bdb2d8"/></g><g transform="translate(3180.5,826.2) scale(0.76)"><polygon points="-12.4,14.2 -3.0,-4.4 -1.2,-4.1 1.5,-1.2 10.1,-9.6 0.9,9.7 -0.9,9.5 -3.2,6.6 -11.6,14.7" fill="#bdb2d8"/></g><g transform="translate(3180.5,855.7) scale(0.76)"><polygon points="-12.5,-3.0 -2.0,-3.0 -6.5,-9.5 2.0,-9.5 10.5,0.0 2.0,9.5 -6.5,9.5 -2.0,3.0 -12.5,3.0" fill="#bdb2d8"/></g><g transform="translate(3180.5,885.7) scale(0.76)"><circle cx="-2" cy="5" r="7.4" fill="#bdb2d8"/><path d="M1.5 -0.5 C1.5 -9.5 10.5 -9.5 10.5 -2.5 L10.5 0.5" fill="none" stroke="#bdb2d8" stroke-width="3.2"/></g></svg><div class="a" style="left:3420.5px;top:823.9px;width:18.0px;height:14.8px;background:#5a4b80;"></div><div class="a" style="left:3420.5px;top:838.7px;width:20.0px;height:10.3px;background:#ababab;"></div><div class="a" style="left:3420.5px;top:849.0px;width:18.0px;height:15.7px;background:#5a4b80;"></div><div class="t" style="left:3266.33px;top:829.22px;font-family:'Liberation Sans', sans-serif;font-size:31.40px;line-height:31.40px;color:#ffffff;transform:scale(0.9574,1.0000);transform-origin:0 26.58px;">RUN0</div><div class="a" style="left:3144.5px;top:909.0px;width:222.0px;height:36.0px;background:#262626;box-sizing:border-box;border:2px solid #6e6e6e;"></div><div class="a" style="left:3368.9px;top:909.0px;width:35.8px;height:36.0px;background:#262626;box-sizing:border-box;border:2px solid #6e6e6e;"></div><div class="a" style="left:3404.7px;top:909.0px;width:35.8px;height:36.0px;background:#262626;box-sizing:border-box;border:2px solid #6e6e6e;"></div><svg width="4064" height="2578"><circle cx="3386.8" cy="927.0" r="9.2" fill="#2c3e5c"/><polygon points="3422.6,916.0 3425.2,924.4 3433.6,927.0 3425.2,929.6 3422.6,938.0 3420.0,929.6 3411.6,927.0 3420.0,924.4" fill="#555555"/></svg><div class="t" style="left:3151.84px;top:914.04px;font-family:'Liberation Mono', monospace;font-size:29.45px;line-height:29.45px;color:#d2d2d2;transform:scale(0.8900,1.0000);transform-origin:0 22.56px;">out1</div><div class="a" style="left:2746.6px;top:1025.4px;width:296.0px;height:166.0px;background:#a9a9a9;"></div><div class="a" style="left:2806.6px;top:1027.4px;width:214.0px;height:162.0px;background:#5c5c5c;"></div><div class="a" style="left:3022.6px;top:1027.4px;width:18.0px;height:162.0px;background:#8e8e8e;"></div><div class="a" style="left:3020.6px;top:1027.4px;width:2.0px;height:162.0px;background:#a9a9a9;"></div><div class="a" style="left:2816.6px;top:1034.1px;width:196.0px;height:147.6px;background:#676767;"></div><svg width="4064" height="2578"><rect x="2865.8" y="1036.8" width="1.6" height="144.6" fill="#8a8a8a"/><rect x="2963.8" y="1036.8" width="1.6" height="144.6" fill="#8a8a8a"/><line x1="2915.6" y1="1036.8" x2="2915.6" y2="1181.4" stroke="#969696" stroke-width="1.9" stroke-dasharray="2.6 2.4"/></svg><div class="a" style="left:2746.6px;top:1025.4px;width:60.0px;height:166.0px;background:#5e8749;box-sizing:border-box;border:2.2px solid #8ee06f;"></div><div class="a" style="left:2766.6px;top:1025.4px;width:2.0px;height:166.0px;background:#8ee06f;"></div><div class="a" style="left:2766.6px;top:1064.8px;width:40.0px;height:2.2px;background:#8ee06f;"></div><div class="a" style="left:2766.6px;top:1103.3px;width:40.0px;height:2.2px;background:#8ee06f;"></div><div class="a" style="left:2766.6px;top:1143.1px;width:40.0px;height:2.2px;background:#8ee06f;"></div><div class="a" style="left:2766.6px;top:1183.1px;width:40.0px;height:2.2px;background:#8ee06f;"></div><div class="a" style="left:2746.6px;top:1102.4px;width:20.5px;height:9.0px;background:#90d870;"></div><svg width="4064" height="2578"><circle cx="2786.6" cy="1047.9" r="8.6" fill="none" stroke="#b2caa2" stroke-width="3.4"/><circle cx="2786.6" cy="1047.9" r="4.4" fill="#b2caa2"/><polygon points="2774.2,1100.1 2783.6,1081.5 2785.4,1081.8 2788.1,1084.7 2796.7,1076.3 2787.5,1095.6 2785.7,1095.4 2783.4,1092.5 2775.0,1100.6" fill="#b2caa2"/><polygon points="2774.1,1123.9 2784.6,1123.9 2780.1,1117.4 2788.6,1117.4 2797.1,1126.9 2788.6,1136.4 2780.1,1136.4 2784.6,1129.9 2774.1,1129.9" fill="#b2caa2"/><circle cx="2784.6" cy="1170.9" r="7.4" fill="#b2caa2"/><path d="M2788.1 1165.4 C2788.1 1156.4 2797.1 1156.4 2797.1 1163.4 L2797.1 1166.4" fill="none" stroke="#b2caa2" stroke-width="3.2"/></svg><div class="a" style="left:3022.6px;top:1081.0px;width:18.0px;height:21.0px;background:#5e8749;"></div><div class="a" style="left:3022.6px;top:1102.0px;width:20.0px;height:10.2px;background:#1b1c20;"></div><div class="a" style="left:3022.6px;top:1112.2px;width:18.0px;height:24.0px;background:#5e8749;"></div><svg width="4064" height="2578"><ellipse cx="2900.60" cy="1125.80" rx="6.00" ry="10.30" fill="none" stroke="#000" stroke-width="3.00"/><path d="M2896.60 1131.60 L2904.60 1118.60" stroke="#000" stroke-width="2.60"/></svg><div class="t" style="left:2917.58px;top:1110.27px;font-family:'Liberation Mono', monospace;font-size:35.68px;line-height:35.68px;color:#000;transform:scale(0.8800,1.0000);transform-origin:0 27.33px;">k1</div><div class="a" style="left:2746.6px;top:1194.6px;width:186.0px;height:36.0px;background:#262626;box-sizing:border-box;border:2px solid #6e6e6e;"></div><div class="a" style="left:2935.0px;top:1194.6px;width:35.9px;height:36.0px;background:#262626;box-sizing:border-box;border:2px solid #6e6e6e;"></div><div class="a" style="left:2970.9px;top:1194.6px;width:35.9px;height:36.0px;background:#262626;box-sizing:border-box;border:2px solid #6e6e6e;"></div><div class="a" style="left:3006.7px;top:1194.6px;width:35.9px;height:36.0px;background:#262626;box-sizing:border-box;border:2px solid #6e6e6e;"></div><svg width="4064" height="2578"><circle cx="2952.9" cy="1212.6" r="9.2" fill="#3a4834"/><circle cx="2988.8" cy="1212.6" r="9.2" fill="#2c3e5c"/><polygon points="3024.7,1201.6 3027.3,1210.0 3035.7,1212.6 3027.3,1215.2 3024.7,1223.6 3022.1,1215.2 3013.7,1212.6 3022.1,1210.0" fill="#555555"/></svg><div class="t" style="left:2753.31px;top:1199.64px;font-family:'Liberation Mono', monospace;font-size:29.45px;line-height:29.45px;color:#d2d2d2;transform:scale(0.8900,1.0000);transform-origin:0 22.56px;">null1</div><div class="a" style="left:2291.2px;top:1139.2px;width:296.0px;height:166.0px;background:#a9a9a9;"></div><div class="a" style="left:2351.2px;top:1141.2px;width:214.0px;height:162.0px;background:#5c5c5c;"></div><div class="a" style="left:2567.2px;top:1141.2px;width:18.0px;height:162.0px;background:#8e8e8e;"></div><div class="a" style="left:2565.2px;top:1141.2px;width:2.0px;height:162.0px;background:#a9a9a9;"></div><div class="a" style="left:2361.2px;top:1147.9px;width:196.0px;height:147.6px;background:#676767;"></div><svg width="4064" height="2578"><rect x="2410.4" y="1150.6" width="1.6" height="144.6" fill="#8a8a8a"/><rect x="2508.4" y="1150.6" width="1.6" height="144.6" fill="#8a8a8a"/><line x1="2460.2" y1="1150.6" x2="2460.2" y2="1295.2" stroke="#969696" stroke-width="1.9" stroke-dasharray="2.6 2.4"/></svg><div class="a" style="left:2291.2px;top:1139.2px;width:60.0px;height:166.0px;background:#5e8749;box-sizing:border-box;border:2.2px solid #8ee06f;"></div><div class="a" style="left:2311.2px;top:1139.2px;width:2.0px;height:166.0px;background:#8ee06f;"></div><div class="a" style="left:2311.2px;top:1178.6px;width:40.0px;height:2.2px;background:#8ee06f;"></div><div class="a" style="left:2311.2px;top:1217.1px;width:40.0px;height:2.2px;background:#8ee06f;"></div><div class="a" style="left:2311.2px;top:1256.9px;width:40.0px;height:2.2px;background:#8ee06f;"></div><div class="a" style="left:2311.2px;top:1296.9px;width:40.0px;height:2.2px;background:#8ee06f;"></div><svg width="4064" height="2578"><circle cx="2331.2" cy="1161.7" r="8.6" fill="none" stroke="#b2caa2" stroke-width="3.4"/><circle cx="2331.2" cy="1161.7" r="4.4" fill="#b2caa2"/><polygon points="2318.8,1213.9 2328.2,1195.3 2330.0,1195.6 2332.7,1198.5 2341.3,1190.1 2332.1,1209.4 2330.3,1209.2 2328.0,1206.3 2319.6,1214.4" fill="#b2caa2"/><polygon points="2318.7,1237.7 2329.2,1237.7 2324.7,1231.2 2333.2,1231.2 2341.7,1240.7 2333.2,1250.2 2324.7,1250.2 2329.2,1243.7 2318.7,1243.7" fill="#b2caa2"/><circle cx="2329.2" cy="1284.7" r="7.4" fill="#b2caa2"/><path d="M2332.7 1279.2 C2332.7 1270.2 2341.7 1270.2 2341.7 1277.2 L2341.7 1280.2" fill="none" stroke="#b2caa2" stroke-width="3.2"/></svg><div class="a" style="left:2567.2px;top:1194.8px;width:18.0px;height:21.0px;background:#5e8749;"></div><div class="a" style="left:2567.2px;top:1215.8px;width:20.0px;height:10.2px;background:#ababab;"></div><div class="a" style="left:2567.2px;top:1226.0px;width:18.0px;height:24.0px;background:#5e8749;"></div><svg width="4064" height="2578"><ellipse cx="2445.20" cy="1239.60" rx="6.00" ry="10.30" fill="none" stroke="#000" stroke-width="3.00"/><path d="M2441.20 1245.40 L2449.20 1232.40" stroke="#000" stroke-width="2.60"/></svg><div class="t" style="left:2462.18px;top:1224.07px;font-family:'Liberation Mono', monospace;font-size:35.68px;line-height:35.68px;color:#000;transform:scale(0.8800,1.0000);transform-origin:0 27.33px;">k1</div><div class="a" style="left:2291.2px;top:1308.4px;width:186.0px;height:36.0px;background:#262626;box-sizing:border-box;border:2px solid #6e6e6e;"></div><div class="a" style="left:2479.6px;top:1308.4px;width:35.9px;height:36.0px;background:#262626;box-sizing:border-box;border:2px solid #6e6e6e;"></div><div class="a" style="left:2515.5px;top:1308.4px;width:35.9px;height:36.0px;background:#262626;box-sizing:border-box;border:2px solid #6e6e6e;"></div><div class="a" style="left:2551.3px;top:1308.4px;width:35.9px;height:36.0px;background:#262626;box-sizing:border-box;border:2px solid #6e6e6e;"></div><svg width="4064" height="2578"><circle cx="2497.5" cy="1326.4" r="9.2" fill="#3a4834"/><circle cx="2533.4" cy="1326.4" r="9.2" fill="#2c3e5c"/><polygon points="2569.3,1315.4 2571.9,1323.8 2580.3,1326.4 2571.9,1329.0 2569.3,1337.4 2566.7,1329.0 2558.3,1326.4 2566.7,1323.8" fill="#555555"/></svg><div class="t" style="left:2297.18px;top:1313.44px;font-family:'Liberation Mono', monospace;font-size:29.45px;line-height:29.45px;color:#d2d2d2;transform:scale(0.8900,1.0000);transform-origin:0 22.56px;">keyboardin1</div><div class="a" style="left:2746.6px;top:1309.0px;width:296.0px;height:166.0px;background:#a9a9a9;"></div><div class="a" style="left:2806.6px;top:1311.0px;width:214.0px;height:162.0px;background:#5c5c5c;"></div><div class="a" style="left:3022.6px;top:1311.0px;width:18.0px;height:162.0px;background:#8e8e8e;"></div><div class="a" style="left:3020.6px;top:1311.0px;width:2.0px;height:162.0px;background:#a9a9a9;"></div><div class="a" style="left:2816.6px;top:1317.7px;width:196.0px;height:147.6px;background:#676767;"></div><svg width="4064" height="2578"><rect x="2865.8" y="1320.4" width="1.6" height="144.6" fill="#8a8a8a"/><rect x="2963.8" y="1320.4" width="1.6" height="144.6" fill="#8a8a8a"/><line x1="2915.6" y1="1320.4" x2="2915.6" y2="1465.0" stroke="#969696" stroke-width="1.9" stroke-dasharray="2.6 2.4"/></svg><div class="a" style="left:2746.6px;top:1309.0px;width:60.0px;height:166.0px;background:#5e8749;box-sizing:border-box;border:2.2px solid #8ee06f;"></div><div class="a" style="left:2766.6px;top:1309.0px;width:2.0px;height:166.0px;background:#8ee06f;"></div><div class="a" style="left:2766.6px;top:1348.4px;width:40.0px;height:2.2px;background:#8ee06f;"></div><div class="a" style="left:2766.6px;top:1386.9px;width:40.0px;height:2.2px;background:#8ee06f;"></div><div class="a" style="left:2766.6px;top:1426.7px;width:40.0px;height:2.2px;background:#8ee06f;"></div><div class="a" style="left:2766.6px;top:1466.7px;width:40.0px;height:2.2px;background:#8ee06f;"></div><div class="a" style="left:2746.6px;top:1353.8px;width:20.5px;height:9.0px;background:#90d870;"></div><div class="a" style="left:2746.6px;top:1387.3px;width:20.5px;height:9.4px;background:#90d870;"></div><div class="a" style="left:2746.6px;top:1418.8px;width:20.0px;height:2.2px;background:#8ee06f;"></div><div class="a" style="left:2746.6px;top:1421.0px;width:20.0px;height:7.0px;background:#1b1c20;"></div><div class="a" style="left:2746.6px;top:1428.0px;width:20.0px;height:2.2px;background:#8ee06f;"></div><svg width="4064" height="2578"><circle cx="2786.6" cy="1331.5" r="8.6" fill="none" stroke="#b2caa2" stroke-width="3.4"/><circle cx="2786.6" cy="1331.5" r="4.4" fill="#b2caa2"/><polygon points="2774.2,1383.7 2783.6,1365.1 2785.4,1365.4 2788.1,1368.3 2796.7,1359.9 2787.5,1379.2 2785.7,1379.0 2783.4,1376.1 2775.0,1384.2" fill="#b2caa2"/><polygon points="2774.1,1407.5 2784.6,1407.5 2780.1,1401.0 2788.6,1401.0 2797.1,1410.5 2788.6,1420.0 2780.1,1420.0 2784.6,1413.5 2774.1,1413.5" fill="#b2caa2"/><circle cx="2784.6" cy="1454.5" r="7.4" fill="#b2caa2"/><path d="M2788.1 1449.0 C2788.1 1440.0 2797.1 1440.0 2797.1 1447.0 L2797.1 1450.0" fill="none" stroke="#b2caa2" stroke-width="3.2"/></svg><div class="a" style="left:3022.6px;top:1364.6px;width:18.0px;height:21.0px;background:#5e8749;"></div><div class="a" style="left:3022.6px;top:1385.6px;width:20.0px;height:10.2px;background:#ababab;"></div><div class="a" style="left:3022.6px;top:1395.8px;width:18.0px;height:24.0px;background:#5e8749;"></div><svg width="4064" height="2578"><ellipse cx="2900.60" cy="1409.40" rx="6.00" ry="10.30" fill="none" stroke="#000" stroke-width="3.00"/><path d="M2896.60 1415.20 L2904.60 1402.20" stroke="#000" stroke-width="2.60"/></svg><div class="t" style="left:2917.58px;top:1393.87px;font-family:'Liberation Mono', monospace;font-size:35.68px;line-height:35.68px;color:#000;transform:scale(0.8800,1.0000);transform-origin:0 27.33px;">k1</div><div class="a" style="left:2746.6px;top:1478.2px;width:186.0px;height:36.0px;background:#262626;box-sizing:border-box;border:2px solid #6e6e6e;"></div><div class="a" style="left:2935.0px;top:1478.2px;width:35.9px;height:36.0px;background:#262626;box-sizing:border-box;border:2px solid #6e6e6e;"></div><div class="a" style="left:2970.9px;top:1478.2px;width:35.9px;height:36.0px;background:#262626;box-sizing:border-box;border:2px solid #6e6e6e;"></div><div class="a" style="left:3006.7px;top:1478.2px;width:35.9px;height:36.0px;background:#262626;box-sizing:border-box;border:2px solid #6e6e6e;"></div><svg width="4064" height="2578"><circle cx="2952.9" cy="1496.2" r="9.2" fill="#3a4834"/><circle cx="2988.8" cy="1496.2" r="9.2" fill="#2c3e5c"/><polygon points="3024.7,1485.2 3027.3,1493.6 3035.7,1496.2 3027.3,1498.8 3024.7,1507.2 3022.1,1498.8 3013.7,1496.2 3022.1,1493.6" fill="#555555"/></svg><div class="t" style="left:2753.94px;top:1483.24px;font-family:'Liberation Mono', monospace;font-size:29.45px;line-height:29.45px;color:#d2d2d2;transform:scale(0.8900,1.0000);transform-origin:0 22.56px;">count1</div><div class="a" style="left:2291.0px;top:1423.3px;width:296.0px;height:166.0px;background:#a9a9a9;"></div><div class="a" style="left:2351.0px;top:1425.3px;width:214.0px;height:162.0px;background:#5c5c5c;"></div><div class="a" style="left:2567.0px;top:1425.3px;width:18.0px;height:162.0px;background:#8e8e8e;"></div><div class="a" style="left:2565.0px;top:1425.3px;width:2.0px;height:162.0px;background:#a9a9a9;"></div><div class="a" style="left:2361.0px;top:1432.0px;width:196.0px;height:147.6px;background:#676767;"></div><div class="a" style="left:2459.0px;top:1434.3px;width:96.0px;height:145.0px;background:#9c9c9c;"></div><svg width="4064" height="2578"><rect x="2410.2" y="1434.7" width="1.6" height="144.6" fill="#8a8a8a"/><rect x="2508.2" y="1434.7" width="1.6" height="144.6" fill="#8a8a8a"/><line x1="2460.0" y1="1434.7" x2="2460.0" y2="1579.3" stroke="#969696" stroke-width="1.9" stroke-dasharray="2.6 2.4"/></svg><div class="a" style="left:2291.0px;top:1423.3px;width:60.0px;height:166.0px;background:#5e8749;box-sizing:border-box;border:2.2px solid #8ee06f;"></div><div class="a" style="left:2311.0px;top:1423.3px;width:2.0px;height:166.0px;background:#8ee06f;"></div><div class="a" style="left:2311.0px;top:1462.7px;width:40.0px;height:2.2px;background:#8ee06f;"></div><div class="a" style="left:2311.0px;top:1501.2px;width:40.0px;height:2.2px;background:#8ee06f;"></div><div class="a" style="left:2311.0px;top:1541.0px;width:40.0px;height:2.2px;background:#8ee06f;"></div><div class="a" style="left:2311.0px;top:1581.0px;width:40.0px;height:2.2px;background:#8ee06f;"></div><div class="a" style="left:2291.0px;top:1500.0px;width:20.5px;height:10.2px;background:#90d870;"></div><svg width="4064" height="2578"><circle cx="2331" cy="1445.8" r="8.6" fill="none" stroke="#b2caa2" stroke-width="3.4"/><circle cx="2331" cy="1445.8" r="4.4" fill="#b2caa2"/><polygon points="2318.6,1498.0 2328.0,1479.4 2329.8,1479.7 2332.5,1482.6 2341.1,1474.2 2331.9,1493.5 2330.1,1493.3 2327.8,1490.4 2319.4,1498.5" fill="#b2caa2"/><polygon points="2318.5,1521.8 2329.0,1521.8 2324.5,1515.3 2333.0,1515.3 2341.5,1524.8 2333.0,1534.3 2324.5,1534.3 2329.0,1527.8 2318.5,1527.8" fill="#b2caa2"/><circle cx="2329" cy="1568.8" r="7.4" fill="#b2caa2"/><path d="M2332.5 1563.3 C2332.5 1554.3 2341.5 1554.3 2341.5 1561.3 L2341.5 1564.3" fill="none" stroke="#b2caa2" stroke-width="3.2"/></svg><div class="a" style="left:2567.0px;top:1478.9px;width:18.0px;height:21.0px;background:#5e8749;"></div><div class="a" style="left:2567.0px;top:1499.9px;width:20.0px;height:10.2px;background:#ababab;"></div><div class="a" style="left:2567.0px;top:1510.1px;width:18.0px;height:24.0px;background:#5e8749;"></div><div class="t" style="left:2438.36px;top:1511.45px;font-family:'Liberation Mono', monospace;font-size:31.40px;line-height:31.40px;color:#000;transform:scale(0.8800,1.0000);transform-origin:0 24.05px;">1</div><div class="t" style="left:2462.94px;top:1511.45px;font-family:'Liberation Mono', monospace;font-size:31.40px;line-height:31.40px;color:#000;transform:scale(0.8800,1.0000);transform-origin:0 24.05px;">ready</div><div class="a" style="left:2291.0px;top:1592.5px;width:186.0px;height:36.0px;background:#262626;box-sizing:border-box;border:2px solid #6e6e6e;"></div><div class="a" style="left:2479.4px;top:1592.5px;width:35.9px;height:36.0px;background:#262626;box-sizing:border-box;border:2px solid #6e6e6e;"></div><div class="a" style="left:2515.3px;top:1592.5px;width:35.9px;height:36.0px;background:#262626;box-sizing:border-box;border:2px solid #6e6e6e;"></div><div class="a" style="left:2551.1px;top:1592.5px;width:35.9px;height:36.0px;background:#262626;box-sizing:border-box;border:2px solid #6e6e6e;"></div><svg width="4064" height="2578"><circle cx="2497.3" cy="1610.5" r="9.2" fill="#3a4834"/><circle cx="2533.2" cy="1610.5" r="9.2" fill="#2c3e5c"/><polygon points="2569.1,1599.5 2571.7,1607.9 2580.1,1610.5 2571.7,1613.1 2569.1,1621.5 2566.5,1613.1 2558.1,1610.5 2566.5,1607.9" fill="#555555"/></svg><div class="t" style="left:2298.23px;top:1597.54px;font-family:'Liberation Mono', monospace;font-size:29.45px;line-height:29.45px;color:#d2d2d2;transform:scale(0.8900,1.0000);transform-origin:0 22.56px;">delay1</div><div class="a" style="left:1893.2px;top:1707.4px;width:296.0px;height:166.0px;background:#a9a9a9;"></div><div class="a" style="left:1953.2px;top:1709.4px;width:214.0px;height:162.0px;background:#5c5c5c;"></div><div class="a" style="left:2169.2px;top:1709.4px;width:18.0px;height:162.0px;background:#8e8e8e;"></div><div class="a" style="left:2167.2px;top:1709.4px;width:2.0px;height:162.0px;background:#a9a9a9;"></div><div class="a" style="left:1963.2px;top:1716.1px;width:196.0px;height:147.6px;background:#676767;"></div><div class="a" style="left:2061.2px;top:1718.4px;width:96.0px;height:145.0px;background:#9c9c9c;"></div><svg width="4064" height="2578"><rect x="2012.5" y="1718.8" width="1.6" height="144.6" fill="#8a8a8a"/><rect x="2110.4" y="1718.8" width="1.6" height="144.6" fill="#8a8a8a"/><line x1="2062.2" y1="1718.8" x2="2062.2" y2="1863.4" stroke="#969696" stroke-width="1.9" stroke-dasharray="2.6 2.4"/></svg><div class="a" style="left:1893.2px;top:1707.4px;width:60.0px;height:166.0px;background:#5e8749;box-sizing:border-box;border:2.2px solid #8ee06f;"></div><div class="a" style="left:1913.2px;top:1707.4px;width:2.0px;height:166.0px;background:#8ee06f;"></div><div class="a" style="left:1913.2px;top:1746.8px;width:40.0px;height:2.2px;background:#8ee06f;"></div><div class="a" style="left:1913.2px;top:1785.3px;width:40.0px;height:2.2px;background:#8ee06f;"></div><div class="a" style="left:1913.2px;top:1825.1px;width:40.0px;height:2.2px;background:#8ee06f;"></div><div class="a" style="left:1913.2px;top:1865.1px;width:40.0px;height:2.2px;background:#8ee06f;"></div><div class="a" style="left:1893.2px;top:1775.4px;width:20.5px;height:29.0px;background:#90d870;"></div><svg width="4064" height="2578"><circle cx="1933.2" cy="1729.9" r="8.6" fill="none" stroke="#b2caa2" stroke-width="3.4"/><circle cx="1933.2" cy="1729.9" r="4.4" fill="#b2caa2"/><polygon points="1920.8,1782.1 1930.2,1763.5 1932.0,1763.8 1934.7,1766.7 1943.3,1758.3 1934.1,1777.6 1932.3,1777.4 1930.0,1774.5 1921.6,1782.6" fill="#b2caa2"/><polygon points="1920.7,1805.9 1931.2,1805.9 1926.7,1799.4 1935.2,1799.4 1943.7,1808.9 1935.2,1818.4 1926.7,1818.4 1931.2,1811.9 1920.7,1811.9" fill="#b2caa2"/><circle cx="1931.2" cy="1852.9" r="7.4" fill="#b2caa2"/><path d="M1934.7 1847.4 C1934.7 1838.4 1943.7 1838.4 1943.7 1845.4 L1943.7 1848.4" fill="none" stroke="#b2caa2" stroke-width="3.2"/></svg><div class="a" style="left:2169.2px;top:1763.0px;width:18.0px;height:21.0px;background:#5e8749;"></div><div class="a" style="left:2169.2px;top:1784.0px;width:20.0px;height:10.2px;background:#ababab;"></div><div class="a" style="left:2169.2px;top:1794.2px;width:18.0px;height:24.0px;background:#5e8749;"></div><div class="t" style="left:2040.56px;top:1795.55px;font-family:'Liberation Mono', monospace;font-size:31.40px;line-height:31.40px;color:#000;transform:scale(0.8800,1.0000);transform-origin:0 24.05px;">1</div><div class="t" style="left:2065.14px;top:1795.55px;font-family:'Liberation Mono', monospace;font-size:31.40px;line-height:31.40px;color:#000;transform:scale(0.8800,1.0000);transform-origin:0 24.05px;">ready</div><div class="a" style="left:1893.2px;top:1876.6px;width:186.0px;height:36.0px;background:#262626;box-sizing:border-box;border:2px solid #6e6e6e;"></div><div class="a" style="left:2081.6px;top:1876.6px;width:35.9px;height:36.0px;background:#262626;box-sizing:border-box;border:2px solid #6e6e6e;"></div><div class="a" style="left:2117.5px;top:1876.6px;width:35.9px;height:36.0px;background:#262626;box-sizing:border-box;border:2px solid #6e6e6e;"></div><div class="a" style="left:2153.3px;top:1876.6px;width:35.9px;height:36.0px;background:#262626;box-sizing:border-box;border:2px solid #6e6e6e;"></div><svg width="4064" height="2578"><circle cx="2099.5" cy="1894.6" r="9.2" fill="#3a4834"/><circle cx="2135.4" cy="1894.6" r="9.2" fill="#2c3e5c"/><polygon points="2171.3,1883.6 2173.9,1892.0 2182.3,1894.6 2173.9,1897.2 2171.3,1905.6 2168.7,1897.2 2160.3,1894.6 2168.7,1892.0" fill="#555555"/></svg><div class="t" style="left:1900.06px;top:1881.64px;font-family:'Liberation Mono', monospace;font-size:29.45px;line-height:29.45px;color:#d2d2d2;transform:scale(0.8900,1.0000);transform-origin:0 22.56px;">select2</div><div class="a" style="left:3143.9px;top:1650.7px;width:296.0px;height:166.0px;background:#a9a9a9;"></div><div class="a" style="left:3203.9px;top:1652.7px;width:214.0px;height:162.0px;background:#5c5c5c;"></div><div class="a" style="left:3419.9px;top:1652.7px;width:18.0px;height:162.0px;background:#8e8e8e;"></div><div class="a" style="left:3417.9px;top:1652.7px;width:2.0px;height:162.0px;background:#a9a9a9;"></div><div class="a" style="left:3213.9px;top:1659.4px;width:196.0px;height:147.6px;background:#676767;"></div><div class="a" style="left:3312.5px;top:1662.5px;width:68.4px;height:143.9px;background:#cfcfb4;"></div><svg width="4064" height="2578"><rect x="3263.2" y="1662.1" width="1.6" height="144.6" fill="#8a8a8a"/><rect x="3361.2" y="1662.1" width="1.6" height="144.6" fill="#8a8a8a"/><line x1="3312.9" y1="1662.1" x2="3312.9" y2="1806.7" stroke="#969696" stroke-width="1.9" stroke-dasharray="2.6 2.4"/></svg><div class="a" style="left:3143.9px;top:1650.7px;width:60.0px;height:166.0px;background:#5e8749;box-sizing:border-box;border:2.2px solid #8ee06f;"></div><div class="a" style="left:3163.9px;top:1650.7px;width:2.0px;height:166.0px;background:#8ee06f;"></div><div class="a" style="left:3163.9px;top:1690.1px;width:40.0px;height:2.2px;background:#8ee06f;"></div><div class="a" style="left:3163.9px;top:1728.6px;width:40.0px;height:2.2px;background:#8ee06f;"></div><div class="a" style="left:3163.9px;top:1768.4px;width:40.0px;height:2.2px;background:#8ee06f;"></div><div class="a" style="left:3163.9px;top:1808.4px;width:40.0px;height:2.2px;background:#8ee06f;"></div><div class="a" style="left:3143.9px;top:1706.4px;width:20.5px;height:10.7px;background:#90d870;"></div><div class="a" style="left:3143.9px;top:1748.2px;width:20.5px;height:10.8px;background:#90d870;"></div><svg width="4064" height="2578"><circle cx="3183.9" cy="1673.2" r="8.6" fill="none" stroke="#b2caa2" stroke-width="3.4"/><circle cx="3183.9" cy="1673.2" r="4.4" fill="#b2caa2"/><polygon points="3171.5,1725.4 3180.9,1706.8 3182.7,1707.1 3185.4,1710.0 3194.0,1701.6 3184.8,1720.9 3183.0,1720.7 3180.7,1717.8 3172.3,1725.9" fill="#b2caa2"/><polygon points="3171.4,1749.2 3181.9,1749.2 3177.4,1742.7 3185.9,1742.7 3194.4,1752.2 3185.9,1761.7 3177.4,1761.7 3181.9,1755.2 3171.4,1755.2" fill="#b2caa2"/><circle cx="3181.9" cy="1796.2" r="7.4" fill="#b2caa2"/><path d="M3185.4 1790.7 C3185.4 1781.7 3194.4 1781.7 3194.4 1788.7 L3194.4 1791.7" fill="none" stroke="#b2caa2" stroke-width="3.2"/></svg><div class="a" style="left:3419.9px;top:1706.3px;width:18.0px;height:21.0px;background:#5e8749;"></div><div class="a" style="left:3419.9px;top:1727.3px;width:20.0px;height:10.2px;background:#ababab;"></div><div class="a" style="left:3419.9px;top:1737.5px;width:18.0px;height:24.0px;background:#5e8749;"></div><div class="t" style="left:3290.51px;top:1735.57px;font-family:'Liberation Mono', monospace;font-size:35.68px;line-height:35.68px;color:#000;transform:scale(0.8800,1.0000);transform-origin:0 27.33px;">7</div><div class="t" style="left:3314.88px;top:1735.57px;font-family:'Liberation Mono', monospace;font-size:35.68px;line-height:35.68px;color:#000;transform:scale(0.8800,1.0000);transform-origin:0 27.33px;">k1</div><div class="a" style="left:3143.9px;top:1819.9px;width:186.0px;height:36.0px;background:#262626;box-sizing:border-box;border:2px solid #6e6e6e;"></div><div class="a" style="left:3332.3px;top:1819.9px;width:35.9px;height:36.0px;background:#262626;box-sizing:border-box;border:2px solid #6e6e6e;"></div><div class="a" style="left:3368.2px;top:1819.9px;width:35.9px;height:36.0px;background:#262626;box-sizing:border-box;border:2px solid #6e6e6e;"></div><div class="a" style="left:3404.0px;top:1819.9px;width:35.9px;height:36.0px;background:#262626;box-sizing:border-box;border:2px solid #6e6e6e;"></div><svg width="4064" height="2578"><circle cx="3350.2" cy="1837.9" r="9.2" fill="#3a4834"/><circle cx="3386.1" cy="1837.9" r="9.2" fill="#2c3e5c"/><polygon points="3422.0,1826.9 3424.6,1835.3 3433.0,1837.9 3424.6,1840.5 3422.0,1848.9 3419.4,1840.5 3411.0,1837.9 3419.4,1835.3" fill="#555555"/></svg><div class="t" style="left:3150.53px;top:1824.94px;font-family:'Liberation Mono', monospace;font-size:29.45px;line-height:29.45px;color:#d2d2d2;transform:scale(0.8900,1.0000);transform-origin:0 22.56px;">hold1</div><div class="a" style="left:3542.0px;top:1650.7px;width:296.0px;height:166.0px;background:#a9a9a9;"></div><div class="a" style="left:3602.0px;top:1652.7px;width:214.0px;height:162.0px;background:#5c5c5c;"></div><div class="a" style="left:3818.0px;top:1652.7px;width:18.0px;height:162.0px;background:#8e8e8e;"></div><div class="a" style="left:3816.0px;top:1652.7px;width:2.0px;height:162.0px;background:#a9a9a9;"></div><div class="a" style="left:3612.0px;top:1659.4px;width:196.0px;height:147.6px;background:#676767;"></div><div class="a" style="left:3710.6px;top:1662.5px;width:68.4px;height:143.9px;background:#cfcfb4;"></div><svg width="4064" height="2578"><rect x="3661.2" y="1662.1" width="1.6" height="144.6" fill="#8a8a8a"/><rect x="3759.2" y="1662.1" width="1.6" height="144.6" fill="#8a8a8a"/><line x1="3711.0" y1="1662.1" x2="3711.0" y2="1806.7" stroke="#969696" stroke-width="1.9" stroke-dasharray="2.6 2.4"/></svg><div class="a" style="left:3542.0px;top:1650.7px;width:60.0px;height:166.0px;background:#5e8749;box-sizing:border-box;border:2.2px solid #8ee06f;"></div><div class="a" style="left:3562.0px;top:1650.7px;width:2.0px;height:166.0px;background:#8ee06f;"></div><div class="a" style="left:3562.0px;top:1690.1px;width:40.0px;height:2.2px;background:#8ee06f;"></div><div class="a" style="left:3562.0px;top:1728.6px;width:40.0px;height:2.2px;background:#8ee06f;"></div><div class="a" style="left:3562.0px;top:1768.4px;width:40.0px;height:2.2px;background:#8ee06f;"></div><div class="a" style="left:3562.0px;top:1808.4px;width:40.0px;height:2.2px;background:#8ee06f;"></div><div class="a" style="left:3542.0px;top:1728.7px;width:20.5px;height:10.0px;background:#90d870;"></div><svg width="4064" height="2578"><circle cx="3582" cy="1673.2" r="8.6" fill="none" stroke="#b2caa2" stroke-width="3.4"/><circle cx="3582" cy="1673.2" r="4.4" fill="#b2caa2"/><polygon points="3569.6,1725.4 3579.0,1706.8 3580.8,1707.1 3583.5,1710.0 3592.1,1701.6 3582.9,1720.9 3581.1,1720.7 3578.8,1717.8 3570.4,1725.9" fill="#b2caa2"/><polygon points="3569.5,1749.2 3580.0,1749.2 3575.5,1742.7 3584.0,1742.7 3592.5,1752.2 3584.0,1761.7 3575.5,1761.7 3580.0,1755.2 3569.5,1755.2" fill="#b2caa2"/><circle cx="3580" cy="1796.2" r="7.4" fill="#b2caa2"/><path d="M3583.5 1790.7 C3583.5 1781.7 3592.5 1781.7 3592.5 1788.7 L3592.5 1791.7" fill="none" stroke="#b2caa2" stroke-width="3.2"/></svg><div class="a" style="left:3818.0px;top:1706.3px;width:18.0px;height:21.0px;background:#5e8749;"></div><div class="a" style="left:3818.0px;top:1727.3px;width:20.0px;height:10.2px;background:#ababab;"></div><div class="a" style="left:3818.0px;top:1737.5px;width:18.0px;height:24.0px;background:#5e8749;"></div><div class="t" style="left:3688.61px;top:1735.57px;font-family:'Liberation Mono', monospace;font-size:35.68px;line-height:35.68px;color:#000;transform:scale(0.8800,1.0000);transform-origin:0 27.33px;">7</div><div class="t" style="left:3712.98px;top:1735.57px;font-family:'Liberation Mono', monospace;font-size:35.68px;line-height:35.68px;color:#000;transform:scale(0.8800,1.0000);transform-origin:0 27.33px;">k1</div><div class="a" style="left:3542.0px;top:1819.9px;width:186.0px;height:36.0px;background:#262626;box-sizing:border-box;border:2px solid #6e6e6e;"></div><div class="a" style="left:3730.4px;top:1819.9px;width:35.9px;height:36.0px;background:#262626;box-sizing:border-box;border:2px solid #6e6e6e;"></div><div class="a" style="left:3766.3px;top:1819.9px;width:35.9px;height:36.0px;background:#262626;box-sizing:border-box;border:2px solid #6e6e6e;"></div><div class="a" style="left:3802.1px;top:1819.9px;width:35.9px;height:36.0px;background:#262626;box-sizing:border-box;border:2px solid #6e6e6e;"></div><svg width="4064" height="2578"><circle cx="3748.3" cy="1837.9" r="9.2" fill="#3a4834"/><circle cx="3784.2" cy="1837.9" r="9.2" fill="#2c3e5c"/><polygon points="3820.1,1826.9 3822.7,1835.3 3831.1,1837.9 3822.7,1840.5 3820.1,1848.9 3817.5,1840.5 3809.1,1837.9 3817.5,1835.3" fill="#555555"/></svg><div class="t" style="left:3549.34px;top:1824.94px;font-family:'Liberation Mono', monospace;font-size:29.45px;line-height:29.45px;color:#d2d2d2;transform:scale(0.8900,1.0000);transform-origin:0 22.56px;">out3</div><div class="a" style="left:1752.0px;top:778.2px;width:36.0px;height:36.0px;background:#8a5a80;box-sizing:border-box;border:2px solid #d27fc2;"></div><svg width="4064" height="2578"><path d="M1766,786 L1774,786 L1774,796 L1780,796 L1770,807 L1760,796 L1766,796 Z" fill="#e6d6e2"/></svg><svg width="4064" height="2578"><rect x="1097" y="658.6" width="70" height="1.3" fill="rgba(140,150,255,0.35)"/><rect x="1363" y="658.6" width="202" height="1.3" fill="rgba(140,150,255,0.35)"/><rect x="1761" y="658.6" width="202" height="1.3" fill="rgba(140,150,255,0.35)"/><rect x="2159" y="658.6" width="202" height="1.3" fill="rgba(140,150,255,0.35)"/><rect x="2557" y="658.6" width="33" height="1.3" fill="rgba(140,150,255,0.35)"/><rect x="1265.8" y="570" width="1.3" height="9" fill="rgba(170,180,255,0.45)"/><rect x="1265.8" y="726.6" width="1.3" height="48.5" fill="rgba(170,180,255,0.35)"/><rect x="2892.5" y="906.7" width="1.1" height="118.7" fill="#a4b6cc"/><rect x="2892.5" y="1191" width="1.1" height="118" fill="#a4b6cc"/></svg><div class="a" style="left:112.0px;top:2289.8px;width:3839.0px;height:1.5px;background:#6a6a6a;"></div><div class="a" style="left:112px;top:2292px;width:556px;height:137px;background:#0d0b18;border-bottom-left-radius:7px;"></div><div class="t" style="left:123.62px;top:2302.99px;font-family:'Liberation Sans', sans-serif;font-size:25.29px;line-height:25.29px;color:#8a919c;transform:scale(1.2022,1.0000);transform-origin:0 21.41px;">Start:</div><div class="t" style="left:244.14px;top:2302.99px;font-family:'Liberation Sans', sans-serif;font-size:25.29px;line-height:25.29px;color:#7a9ee0;transform:scale(0.9629,1.0000);transform-origin:0 21.41px;">1</div><div class="t" style="left:382.95px;top:2302.99px;font-family:'Liberation Sans', sans-serif;font-size:25.29px;line-height:25.29px;color:#8a919c;transform:scale(1.1334,1.0000);transform-origin:0 21.41px;">End:</div><div class="t" style="left:504.03px;top:2302.99px;font-family:'Liberation Sans', sans-serif;font-size:25.29px;line-height:25.29px;color:#7a9ee0;transform:scale(1.1446,1.0000);transform-origin:0 21.41px;">600000</div><div class="t" style="left:122.66px;top:2333.39px;font-family:'Liberation Sans', sans-serif;font-size:25.29px;line-height:25.29px;color:#8a919c;transform:scale(1.1303,1.0000);transform-origin:0 21.41px;">RStart:</div><div class="t" style="left:244.14px;top:2333.39px;font-family:'Liberation Sans', sans-serif;font-size:25.29px;line-height:25.29px;color:#7a9ee0;transform:scale(0.9629,1.0000);transform-origin:0 21.41px;">1</div><div class="t" style="left:383.10px;top:2333.39px;font-family:'Liberation Sans', sans-serif;font-size:25.29px;line-height:25.29px;color:#8a919c;transform:scale(1.0621,1.0000);transform-origin:0 21.41px;">REnd:</div><div class="t" style="left:504.03px;top:2333.39px;font-family:'Liberation Sans', sans-serif;font-size:25.29px;line-height:25.29px;color:#7a9ee0;transform:scale(1.1446,1.0000);transform-origin:0 21.41px;">600000</div><div class="t" style="left:122.96px;top:2364.49px;font-family:'Liberation Sans', sans-serif;font-size:25.29px;line-height:25.29px;color:#8a919c;transform:scale(0.9840,1.0000);transform-origin:0 21.41px;">FPS:</div><div class="t" style="left:244.52px;top:2364.49px;font-family:'Liberation Sans', sans-serif;font-size:25.29px;line-height:25.29px;color:#7a9ee0;transform:scale(1.1501,1.0000);transform-origin:0 21.41px;">60.0</div><div class="t" style="left:384.71px;top:2364.49px;font-family:'Liberation Sans', sans-serif;font-size:25.29px;line-height:25.29px;color:#8a919c;transform:scale(1.0379,1.0000);transform-origin:0 21.41px;">Tempo:</div><div class="t" style="left:503.33px;top:2364.49px;font-family:'Liberation Sans', sans-serif;font-size:25.29px;line-height:25.29px;color:#7a9ee0;transform:scale(1.1263,1.0000);transform-origin:0 21.41px;">120.0</div><div class="t" style="left:122.83px;top:2394.39px;font-family:'Liberation Sans', sans-serif;font-size:25.29px;line-height:25.29px;color:#8a919c;transform:scale(1.0456,1.0000);transform-origin:0 21.41px;">ResetF:</div><div class="t" style="left:244.14px;top:2394.39px;font-family:'Liberation Sans', sans-serif;font-size:25.29px;line-height:25.29px;color:#7a9ee0;transform:scale(0.9629,1.0000);transform-origin:0 21.41px;">1</div><div class="t" style="left:384.71px;top:2394.39px;font-family:'Liberation Sans', sans-serif;font-size:25.29px;line-height:25.29px;color:#8a919c;transform:scale(1.0447,1.0000);transform-origin:0 21.41px;">T Sig:</div><div class="t" style="left:504.86px;top:2394.39px;font-family:'Liberation Sans', sans-serif;font-size:25.29px;line-height:25.29px;color:#7a9ee0;transform:scale(1.0985,1.0000);transform-origin:0 21.41px;">4</div><div class="t" style="left:572.86px;top:2394.39px;font-family:'Liberation Sans', sans-serif;font-size:25.29px;line-height:25.29px;color:#7a9ee0;transform:scale(1.0985,1.0000);transform-origin:0 21.41px;">4</div><div class="a" style="left:667.5px;top:2291.0px;width:1.5px;height:138.0px;background:#7a7a7a;"></div><div class="a" style="left:669.0px;top:2292.0px;width:3280.0px;height:26.0px;background:#101010;"></div><div class="a" style="left:669.0px;top:2317.8px;width:3280.0px;height:1.3px;background:#5a5a5a;"></div><svg width="4064" height="2578"><rect x="940.2" y="2291" width="1.3" height="27" fill="#555"/><rect x="1213.2" y="2291" width="1.3" height="27" fill="#555"/><rect x="1487.2" y="2291" width="1.3" height="27" fill="#555"/><rect x="1760.7" y="2291" width="1.3" height="27" fill="#555"/><rect x="2034.2" y="2291" width="1.3" height="27" fill="#555"/><rect x="2307.7" y="2291" width="1.3" height="27" fill="#555"/><rect x="2581.2" y="2291" width="1.3" height="27" fill="#555"/><rect x="2854.7" y="2291" width="1.3" height="27" fill="#555"/><rect x="3128.2" y="2291" width="1.3" height="27" fill="#555"/><rect x="3401.7" y="2291" width="1.3" height="27" fill="#555"/><rect x="3675.2" y="2291" width="1.3" height="27" fill="#555"/><rect x="1730" y="2290.5" width="4" height="23.5" fill="#4a5c8c"/></svg><div class="t" style="left:671.43px;top:2291.92px;font-family:'Liberation Sans', sans-serif;font-size:22.53px;line-height:22.53px;color:#8e8e8e;transform:scale(0.8545,1.0000);transform-origin:0 19.08px;">1</div><div class="t" style="left:943.55px;top:2291.92px;font-family:'Liberation Sans', sans-serif;font-size:22.53px;line-height:22.53px;color:#8e8e8e;transform:scale(1.0553,1.0000);transform-origin:0 19.08px;">50001</div><div class="t" style="left:1215.66px;top:2291.92px;font-family:'Liberation Sans', sans-serif;font-size:22.53px;line-height:22.53px;color:#8e8e8e;transform:scale(1.0710,1.0000);transform-origin:0 19.08px;">100001</div><div class="t" style="left:1489.66px;top:2291.92px;font-family:'Liberation Sans', sans-serif;font-size:22.53px;line-height:22.53px;color:#8e8e8e;transform:scale(1.0710,1.0000);transform-origin:0 19.08px;">150001</div><div class="t" style="left:1763.80px;top:2291.92px;font-family:'Liberation Sans', sans-serif;font-size:22.53px;line-height:22.53px;color:#8e8e8e;transform:scale(1.0624,1.0000);transform-origin:0 19.08px;">200001</div><div class="t" style="left:2037.30px;top:2291.92px;font-family:'Liberation Sans', sans-serif;font-size:22.53px;line-height:22.53px;color:#8e8e8e;transform:scale(1.0624,1.0000);transform-origin:0 19.08px;">250001</div><div class="t" style="left:2311.09px;top:2291.92px;font-family:'Liberation Sans', sans-serif;font-size:22.53px;line-height:22.53px;color:#8e8e8e;transform:scale(1.0584,1.0000);transform-origin:0 19.08px;">300001</div><div class="t" style="left:2584.59px;top:2291.92px;font-family:'Liberation Sans', sans-serif;font-size:22.53px;line-height:22.53px;color:#8e8e8e;transform:scale(1.0584,1.0000);transform-origin:0 19.08px;">350001</div><div class="t" style="left:2858.46px;top:2291.92px;font-family:'Liberation Sans', sans-serif;font-size:22.53px;line-height:22.53px;color:#8e8e8e;transform:scale(1.0535,1.0000);transform-origin:0 19.08px;">400001</div><div class="t" style="left:3131.96px;top:2291.92px;font-family:'Liberation Sans', sans-serif;font-size:22.53px;line-height:22.53px;color:#8e8e8e;transform:scale(1.0535,1.0000);transform-origin:0 19.08px;">450001</div><div class="t" style="left:3405.04px;top:2291.92px;font-family:'Liberation Sans', sans-serif;font-size:22.53px;line-height:22.53px;color:#8e8e8e;transform:scale(1.0591,1.0000);transform-origin:0 19.08px;">500001</div><div class="t" style="left:3678.54px;top:2291.92px;font-family:'Liberation Sans', sans-serif;font-size:22.53px;line-height:22.53px;color:#8e8e8e;transform:scale(1.0591,1.0000);transform-origin:0 19.08px;">550001</div><div class="t" style="left:3865.29px;top:2291.92px;font-family:'Liberation Sans', sans-serif;font-size:22.53px;line-height:22.53px;color:#8e8e8e;transform:scale(1.0594,1.0000);transform-origin:0 19.08px;">600000</div><div class="a" style="left:669.0px;top:2319.0px;width:3280.0px;height:22.0px;background:#0c0c0c;"></div><div class="a" style="left:672.0px;top:2322.0px;width:42.0px;height:16.0px;background:#4a4a4a;box-sizing:border-box;border:1px solid #5a5a5a;"></div><div class="a" style="left:716.0px;top:2322.0px;width:3185.0px;height:16.0px;background:#3b4f72;"></div><div class="a" style="left:3904.0px;top:2322.0px;width:42.0px;height:16.0px;background:#4a4a4a;box-sizing:border-box;border:1px solid #5a5a5a;"></div><svg width="4064" height="2578"><g fill="#6a6a6a"><circle cx="688" cy="2332" r="1"/><circle cx="693" cy="2332" r="1"/><circle cx="698" cy="2332" r="1"/><circle cx="3920" cy="2332" r="1"/><circle cx="3925" cy="2332" r="1"/><circle cx="3930" cy="2332" r="1"/></g></svg><div class="a" style="left:669.0px;top:2341.0px;width:3280.0px;height:1.5px;background:#646464;"></div><div class="a" style="left:669px;top:2343px;width:3282px;height:86px;background:#2f3035;border-bottom-right-radius:7px;"></div><div class="a" style="left:676.0px;top:2346.0px;width:39.0px;height:40.0px;background:#34363e;box-sizing:border-box;border:1.5px solid #5b5e65;"></div><div class="a" style="left:676.0px;top:2385.0px;width:39.0px;height:37.0px;background:#34363e;box-sizing:border-box;border:1.5px solid #5b5e65;"></div><div class="t" style="left:692.07px;top:2355.08px;font-family:'Liberation Sans', sans-serif;font-size:24.71px;line-height:24.71px;color:#7a7e88;">/</div><svg width="4064" height="2578"><path d="M689 2397 L702 2397 M695.5 2397 L695.5 2413 M689 2413 L702 2413" stroke="#7a7e88" stroke-width="2.2"/></svg><div class="a" style="left:722.0px;top:2346.0px;width:135.0px;height:36.0px;background:#34363e;box-sizing:border-box;border:1.5px solid #5b5e65;"></div><div class="a" style="left:724.5px;top:2348.5px;width:130.0px;height:31.0px;background:#c9804a;"></div><div class="t" style="left:734.46px;top:2352.34px;font-family:'Liberation Sans', sans-serif;font-size:25.58px;line-height:25.58px;color:#4a1008;transform:scale(0.9373,1.0000);transform-origin:0 21.66px;">TimeCode</div><div class="a" style="left:722.0px;top:2385.0px;width:135.0px;height:36.0px;background:#34363e;box-sizing:border-box;border:1.5px solid #5b5e65;"></div><div class="t" style="left:754.81px;top:2391.34px;font-family:'Liberation Sans', sans-serif;font-size:25.58px;line-height:25.58px;color:#a9b4c8;transform:scale(1.0418,1.0000);transform-origin:0 21.66px;">Beats</div><div class="a" style="left:862.0px;top:2346.0px;width:400.0px;height:78.0px;background:#000000;box-sizing:border-box;border:1.5px solid #4a4a4a;"></div><div class="t" style="left:904.35px;top:2360.35px;font-family:'Liberation Sans', sans-serif;font-size:54.51px;line-height:54.51px;color:#78a0ea;transform:scale(1.1037,1.0000);transform-origin:0 46.15px;">00:53:55.23</div><div class="a" style="left:1266.0px;top:2346.0px;width:270.0px;height:78.0px;background:#000000;box-sizing:border-box;border:1.5px solid #4a4a4a;"></div><div class="t" style="left:1305.91px;top:2360.35px;font-family:'Liberation Sans', sans-serif;font-size:54.51px;line-height:54.51px;color:#78a0ea;transform:scale(1.0572,1.0000);transform-origin:0 46.15px;">194122</div><div class="a" style="left:1540.2px;top:2346.4px;width:77.4px;height:77.1px;background:#34363e;box-sizing:border-box;border:1.5px solid #5b5e65;"></div><div class="a" style="left:1622.4px;top:2346.4px;width:77.5px;height:77.1px;background:#34363e;box-sizing:border-box;border:1.5px solid #5b5e65;"></div><div class="a" style="left:1704.3px;top:2346.4px;width:77.5px;height:77.1px;background:#34363e;box-sizing:border-box;border:1.5px solid #5b5e65;"></div><div class="a" style="left:1786.3px;top:2346.4px;width:76.8px;height:77.1px;background:#c4834e;box-sizing:border-box;border:1.5px solid #5b5e65;"></div><div class="a" style="left:1868.2px;top:2346.4px;width:77.5px;height:77.1px;background:#34363e;box-sizing:border-box;border:1.5px solid #5b5e65;"></div><div class="a" style="left:1950.1px;top:2346.4px;width:77.5px;height:77.1px;background:#34363e;box-sizing:border-box;border:1.5px solid #5b5e65;"></div><svg width="4064" height="2578"><rect x="1566.5" y="2375" width="3.5" height="20" fill="#a9b4c8"/><path d="M1570 2385 L1580 2375 L1580 2395 Z M1580 2385 L1591 2375 L1591 2395 Z" fill="#a9b4c8"/><rect x="1654" y="2375" width="5" height="20" fill="#a9b4c8"/><rect x="1664" y="2375" width="5" height="20" fill="#a9b4c8"/><path d="M1735 2385 L1745 2374 L1745 2396 Z" fill="#a9b4c8"/><path d="M1821 2374 L1831 2385 L1821 2396 Z" fill="#3a0a08"/><rect x="1902" y="2384" width="10" height="3" fill="#a9b4c8"/><path d="M1989 2374 L1989 2396 M1978 2385 L2000 2385" stroke="#a9b4c8" stroke-width="3"/></svg><div class="t" style="left:2037.10px;top:2351.48px;font-family:'Liberation Sans', sans-serif;font-size:24.71px;line-height:24.71px;color:#a9b4c8;transform:scale(1.0876,1.0000);transform-origin:0 20.92px;">Range Limit</div><div class="a" style="left:2034.5px;top:2388.8px;width:102.5px;height:34.7px;background:#34363e;box-sizing:border-box;border:1.5px solid #5b5e65;"></div><div class="a" style="left:2036.5px;top:2390.8px;width:98.5px;height:30.7px;background:#c9804a;"></div><div class="t" style="left:2055.99px;top:2394.08px;font-family:'Liberation Sans', sans-serif;font-size:24.71px;line-height:24.71px;color:#4a1008;transform:scale(1.0635,1.0000);transform-origin:0 20.92px;">Loop</div><div class="a" style="left:2140.0px;top:2388.8px;width:87.7px;height:34.7px;background:#34363e;box-sizing:border-box;border:1.5px solid #5b5e65;"></div><div class="t" style="left:2153.13px;top:2394.08px;font-family:'Liberation Sans', sans-serif;font-size:24.71px;line-height:24.71px;color:#a9b4c8;transform:scale(1.0389,1.0000);transform-origin:0 20.92px;">Once</div><div class="a" style="left:111.5px;top:75.5px;width:3840px;height:2354.5px;box-sizing:border-box;border:1.6px solid #85878e;border-radius:11px 11px 7px 7px;"></div></body></html>
